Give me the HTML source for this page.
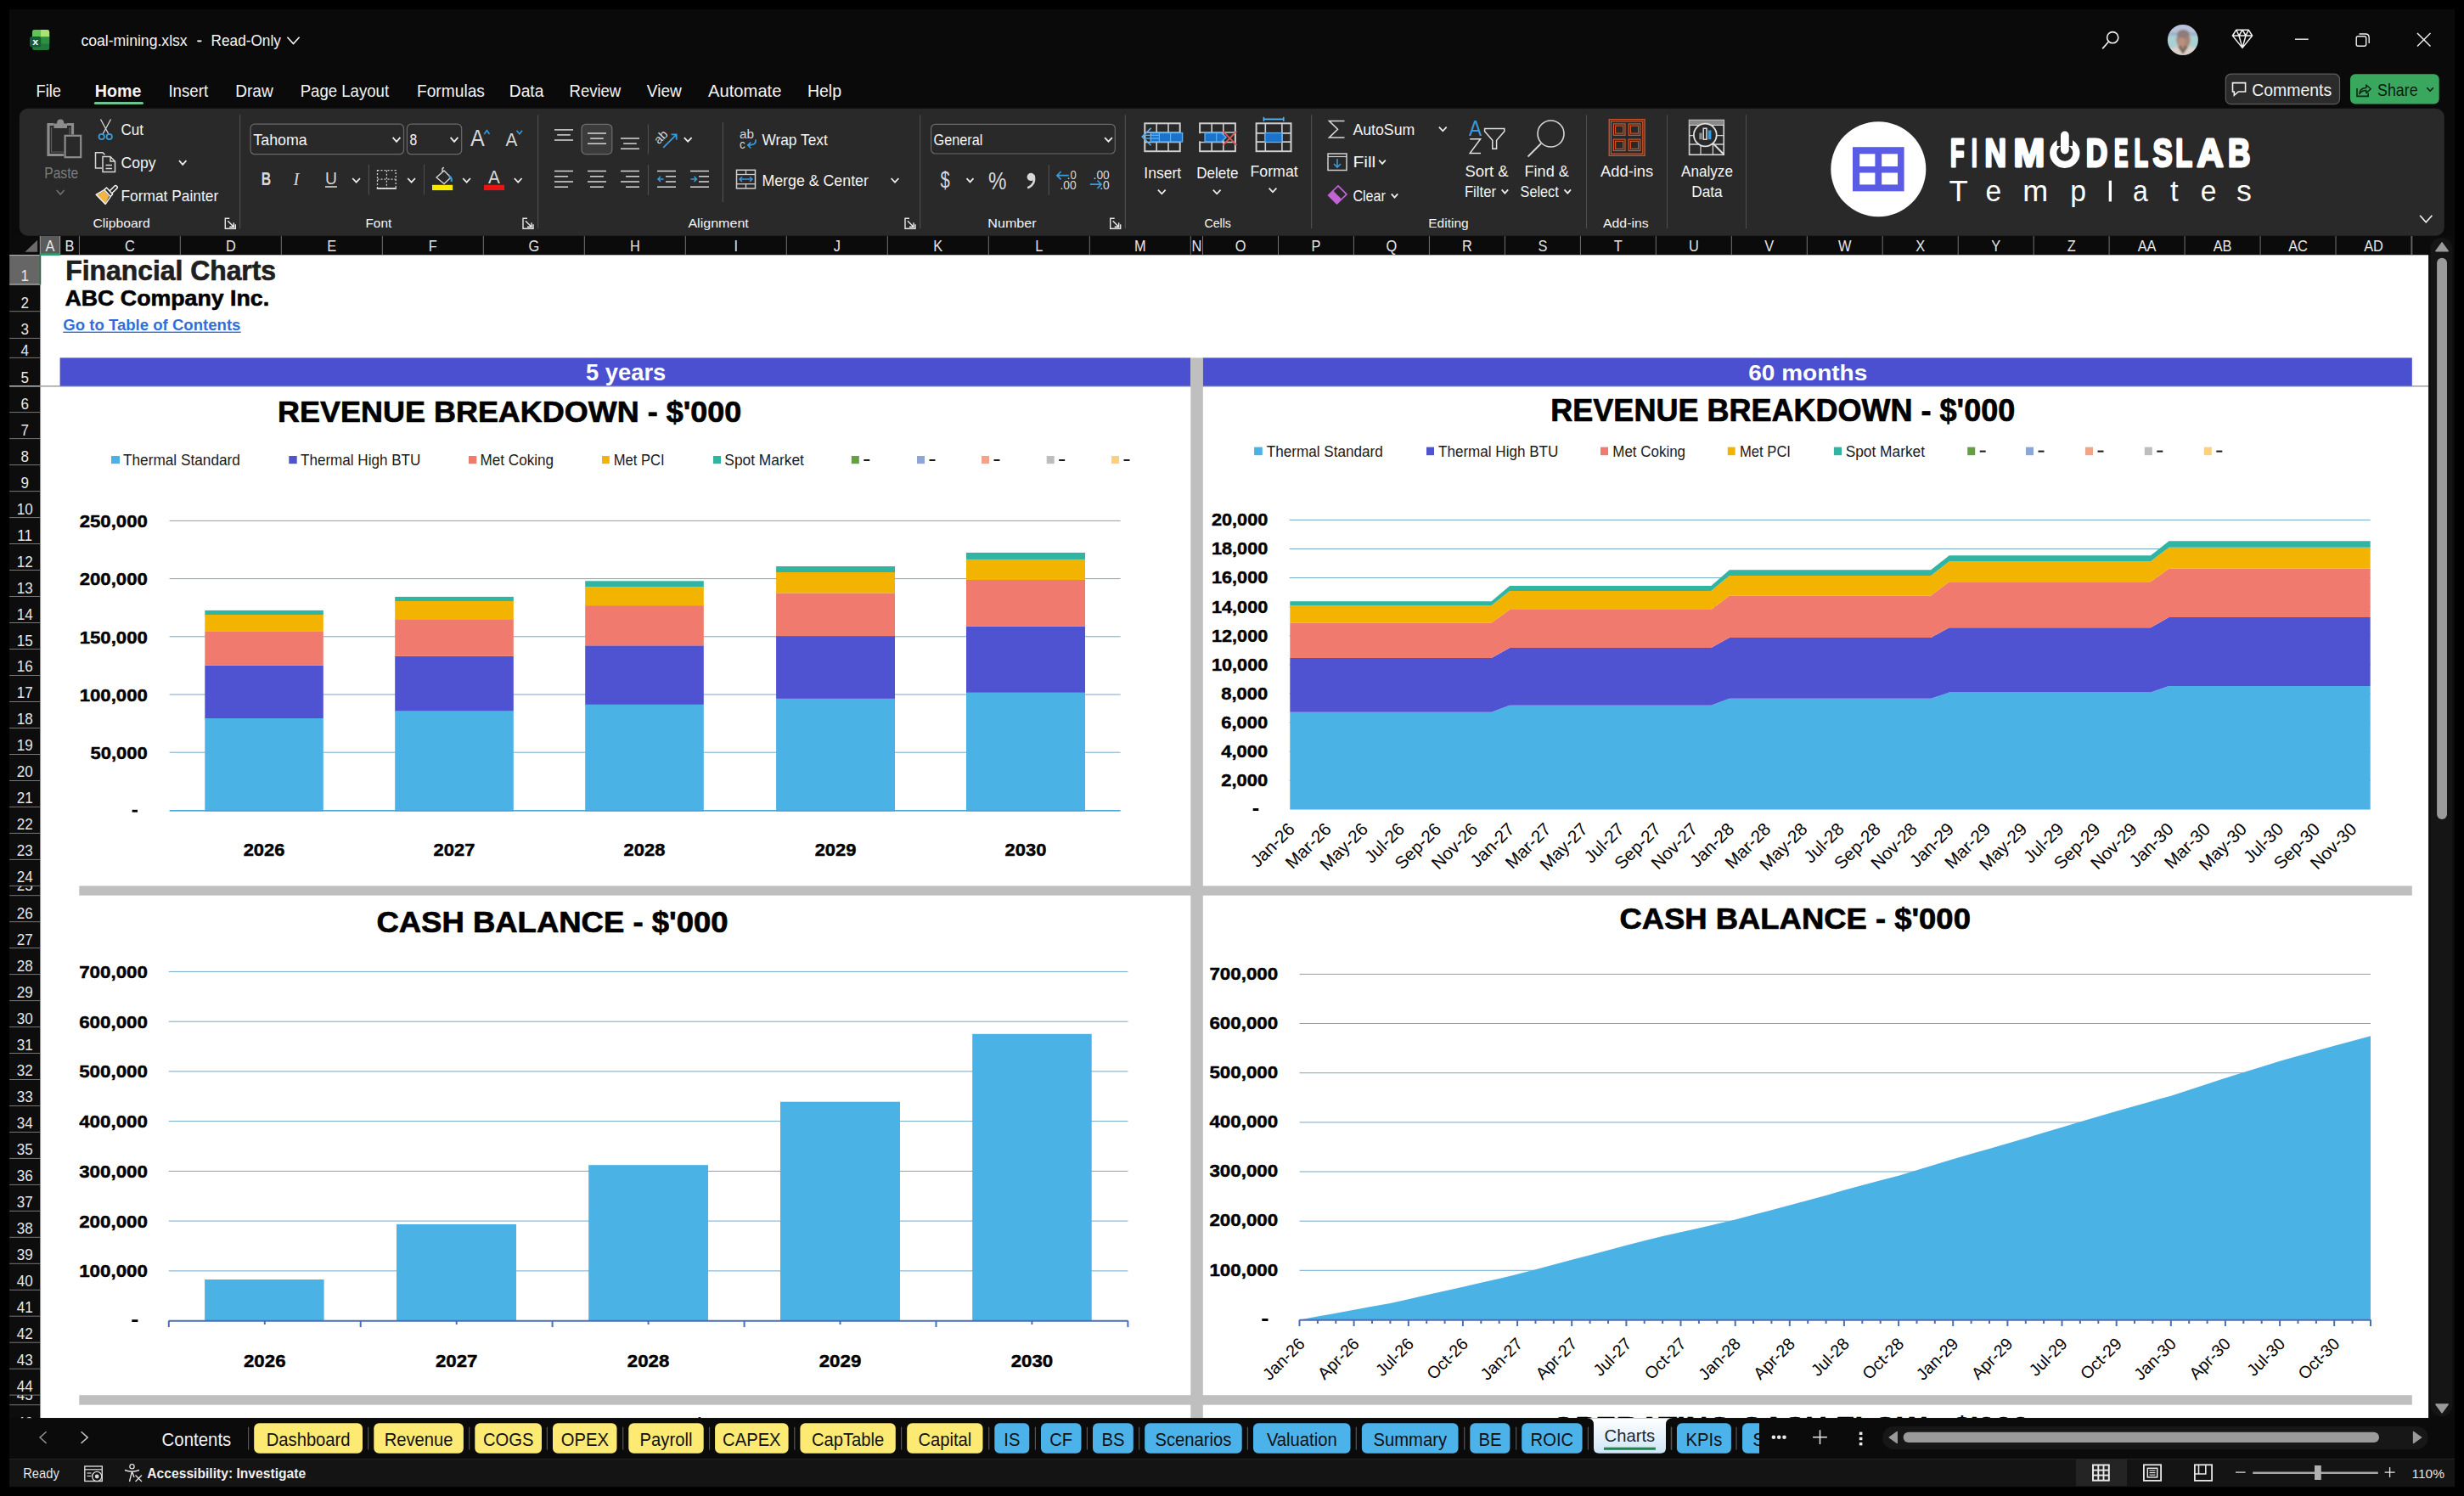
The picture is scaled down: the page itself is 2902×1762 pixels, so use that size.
<!DOCTYPE html><html><head><meta charset="utf-8"><title>coal-mining.xlsx - Excel</title>
<style>html,body{margin:0;padding:0;background:#000;width:2902px;height:1762px;overflow:hidden}svg{position:absolute;left:0;top:0;font-family:"Liberation Sans", sans-serif} text{font-family:"Liberation Sans", sans-serif}</style></head><body>
<svg width="2902" height="1762" viewBox="0 0 2902 1762">
<rect x="0.0" y="0.0" width="2902.0" height="1762.0" fill="#000" />
<rect x="11.0" y="11.0" width="2880.0" height="1740.0" fill="#0a0a0a" />
<rect x="38.0" y="35.0" width="20.2" height="24.0" fill="#217a3c" rx="2.5" />
<path d="M38 43.5 L38 38 Q38 35 41 35 L47.6 35 L47.6 43.5 Z" fill="#5fc25b" />
<path d="M47.6 43.5 L47.6 35 L55.2 35 Q58.2 35 58.2 38 L58.2 43.5 Z" fill="#a9e271" />
<rect x="38.0" y="43.5" width="20.2" height="8.0" fill="#2f8f41" />
<rect x="35.0" y="43.0" width="13.2" height="12.6" fill="#185c37" rx="2.5" />
<text transform="matrix(1.1880 0 0 1 38.30 53.00)" font-size="10.47" fill="#ffffff" font-weight="700" >x</text>
<text transform="matrix(0.9186 0 0 1 95.40 54.40)" font-size="19.19" fill="#f5f5f5" >coal-mining.xlsx</text>
<text transform="matrix(0.7935 0 0 1 232.30 54.40)" font-size="19.19" fill="#f5f5f5" >-</text>
<rect x="232.3" y="47.5" width="5.1" height="1.5" fill="#f5f5f5" />
<text transform="matrix(0.8963 0 0 1 248.60 54.40)" font-size="19.19" fill="#f5f5f5" >Read-Only</text>
<path d="M338.4 43.8 L345.5 51.6 L352.6 43.8" fill="none" stroke="#f5f5f5" stroke-width="1.6" />
<circle cx="2488.2" cy="44.2" r="6.6" fill="none" stroke="#f0f0f0" stroke-width="1.6"/>
<line x1="2483.3" y1="49.3" x2="2476.2" y2="57.4" stroke="#f0f0f0" stroke-width="1.6" />
<defs><clipPath id="av"><circle cx="2570.9" cy="47.0" r="18"/></clipPath><filter id="avb" x="-10%" y="-10%" width="120%" height="120%"><feGaussianBlur stdDeviation="0.9"/></filter></defs>
<g clip-path="url(#av)"><g filter="url(#avb)">
<rect x="2550.0" y="26.0" width="42.0" height="42.0" fill="#a9d0d2" />
<rect x="2550.0" y="26.0" width="42.0" height="15.0" fill="#b9c3dc" />
<rect x="2550.0" y="38.0" width="42.0" height="4.0" fill="#9fb4c8" />
<ellipse cx="2571.4" cy="46.5" rx="8.2" ry="10.5" fill="#a88474"/>
<ellipse cx="2571.4" cy="40.0" rx="7.2" ry="5.0" fill="#8e7c7a"/>
<ellipse cx="2569.5" cy="49.5" rx="4.5" ry="5" fill="#b89080"/>
<path d="M2550 68 L2553 59 Q2560 54.5 2565 55 L2571 62 L2577 55 Q2584 54.5 2590 59 L2592 68 Z" fill="#d9d2ca" />
<path d="M2565 55 L2571 64 L2577 55 L2574 54 L2571 58 L2568 54 Z" fill="#7a5e4e" />
</g></g>
<path d="M2633.8 35.2 L2648.2 35.2 L2652.6 42.0 L2641.0 56.4 L2629.4 42.0 Z M2629.4 42.0 L2652.6 42.0 M2633.8 35.2 L2637.0 42.0 L2641.0 35.2 L2645.0 42.0 L2648.2 35.2 M2637.0 42.0 L2641.0 56.4 L2645.0 42.0" fill="none" stroke="#f0f0f0" stroke-width="1.5" stroke-linejoin="round"/>
<line x1="2703.0" y1="46.2" x2="2718.7" y2="46.2" stroke="#f0f0f0" stroke-width="1.4" />
<rect x="2775.2" y="42.8" width="11.5" height="11.5" fill="none" rx="2" stroke="#f0f0f0" stroke-width="1.4" />
<path d="M2778.5 40.0 L2786.0 40.0 Q2790.2 40.0 2790.2 44.2 L2790.2 51.0" fill="none" stroke="#f0f0f0" stroke-width="1.4" />
<line x1="2847.0" y1="39.0" x2="2862.5" y2="54.5" stroke="#f0f0f0" stroke-width="1.5" />
<line x1="2862.5" y1="39.0" x2="2847.0" y2="54.5" stroke="#f0f0f0" stroke-width="1.5" />
<rect x="2621.3" y="87.2" width="134.2" height="35.4" fill="#2b2b2b" rx="6" stroke="#5d5d5d" stroke-width="1.2" />
<path d="M2629.5 97.6 L2644.6 97.6 L2644.6 108.0 L2636.3 108.0 L2631.3 112.3 L2631.3 108.0 L2629.5 108.0 Z" fill="none" stroke="#f0f0f0" stroke-width="1.6" stroke-linejoin="miter"/>
<text transform="matrix(0.9908 0 0 1 2652.20 112.70)" font-size="19.62" fill="#f5f5f5" >Comments</text>
<rect x="2768.0" y="87.2" width="104.7" height="35.4" fill="#3aa75e" rx="6" />
<path d="M2776.0 104.0 L2776.0 113.4 L2789.2 113.4 L2789.2 109.5" fill="none" stroke="#0d2614" stroke-width="1.6" />
<path d="M2778.8 110.6 Q2779.5 103.8 2786.8 103.6 L2786.8 100.0 L2792.2 104.8 L2786.8 109.6 L2786.8 106.6 Q2781.8 106.6 2778.8 110.6 Z" fill="none" stroke="#0d2614" stroke-width="1.5" stroke-linejoin="round"/>
<text transform="matrix(0.9086 0 0 1 2800.00 112.70)" font-size="19.62" fill="#0d1a10" >Share</text>
<path d="M2858.3 103.3 L2862.1 107.2 L2865.9 103.3" fill="none" stroke="#0d1a10" stroke-width="1.6" />
<text transform="matrix(0.9104 0 0 1 42.60 114.00)" font-size="20.06" fill="#f5f5f5" >File</text>
<text transform="matrix(0.9792 0 0 1 111.80 114.00)" font-size="20.06" fill="#f5f5f5" font-weight="700" >Home</text>
<text transform="matrix(0.9313 0 0 1 198.40 114.00)" font-size="20.06" fill="#f5f5f5" >Insert</text>
<text transform="matrix(0.9523 0 0 1 277.20 114.00)" font-size="20.06" fill="#f5f5f5" >Draw</text>
<text transform="matrix(0.9278 0 0 1 353.70 114.00)" font-size="20.06" fill="#f5f5f5" >Page Layout</text>
<text transform="matrix(0.9565 0 0 1 491.00 114.00)" font-size="20.06" fill="#f5f5f5" >Formulas</text>
<text transform="matrix(0.9570 0 0 1 599.80 114.00)" font-size="20.06" fill="#f5f5f5" >Data</text>
<text transform="matrix(0.9241 0 0 1 670.50 114.00)" font-size="20.06" fill="#f5f5f5" >Review</text>
<text transform="matrix(0.9507 0 0 1 761.80 114.00)" font-size="20.06" fill="#f5f5f5" >View</text>
<text transform="matrix(1.0076 0 0 1 834.00 114.00)" font-size="20.06" fill="#f5f5f5" >Automate</text>
<text transform="matrix(0.9704 0 0 1 951.00 114.00)" font-size="20.06" fill="#f5f5f5" >Help</text>
<rect x="110.8" y="120.1" width="58.2" height="3.0" fill="#6cc48f" rx="1.5" />
<rect x="22.8" y="127.8" width="2856.0" height="149.9" fill="#292929" rx="10" />
<path d="M63.5 146.5 L57 146.5 L57 182.5 L75 182.5 M85.5 158.5 L85.5 146.5 L79 146.5" fill="none" stroke="#8c8c8c" stroke-width="3.2" />
<path d="M60.5 150 L60.5 179 L75 179 M82 158.5 L82 150" fill="none" stroke="#5e5e5e" stroke-width="1.2" />
<path d="M63.5 151 L63.5 145.5 L67 145.5 Q67 140.5 71.2 140.5 Q75.4 140.5 75.4 145.5 L79 145.5 L79 151 Z" fill="#8c8c8c" />
<rect x="76.6" y="159.8" width="18.6" height="25.4" fill="none" stroke="#8c8c8c" stroke-width="2.2" />
<text transform="matrix(0.8976 0 0 1 52.20 209.70)" font-size="17.44" fill="#7c7c7c" >Paste</text>
<path d="M66.7 224.0 L71.2 229.0 L75.7 224.0" fill="none" stroke="#6e6e6e" stroke-width="1.8" />
<path d="M118.5 140.5 L128.5 159 M130.5 140.5 L120.5 159" fill="none" stroke="#d8d8d8" stroke-width="1.3" />
<circle cx="119.7" cy="161" r="3.2" fill="none" stroke="#3b9ad9" stroke-width="1.8"/>
<circle cx="128.7" cy="161" r="3.2" fill="none" stroke="#3b9ad9" stroke-width="1.8"/>
<text transform="matrix(0.9610 0 0 1 142.50 158.80)" font-size="17.73" fill="#f5f5f5" >Cut</text>
<path d="M120 198 L112.5 198 L112.5 179.8 L121 179.8 L123.5 182.3" fill="none" stroke="#d6d6d6" stroke-width="1.5" />
<path d="M121 184.5 L130 184.5 L135.5 190 L135.5 202.5 L121 202.5 Z M130 184.5 L130 190 L135.5 190 M124.5 194.5 L132 194.5 M124.5 198.5 L132 198.5" fill="none" stroke="#d6d6d6" stroke-width="1.5" />
<text transform="matrix(0.9688 0 0 1 142.50 197.70)" font-size="18.17" fill="#f5f5f5" >Copy</text>
<path d="M211.0 189.2 L215.2 193.8 L219.4 189.2" fill="none" stroke="#ececec" stroke-width="1.8" />
<path d="M113.5 229.5 L118.5 234 L124 240 Z" fill="#e8a33a" />
<path d="M113.5 229.5 L123 224.5 L128.5 231 L124 240 Z" fill="#f0b545" />
<path d="M113.2 229.2 L122.8 223.6 L130.2 231.6 L124.2 240.4 Z" fill="none" stroke="#f2f2f2" stroke-width="1.5" stroke-linejoin="round"/>
<path d="M122.8 223.6 L125.5 221 L132.6 228.8 L130.2 231.6" fill="none" stroke="#f2f2f2" stroke-width="1.5" stroke-linejoin="round"/>
<path d="M129 225 L134.8 219.2 Q136.3 217.8 137.6 219.2 Q139 220.6 137.6 222 L131.8 227.8" fill="none" stroke="#f2f2f2" stroke-width="1.5" stroke-linejoin="round"/>
<text transform="matrix(0.9256 0 0 1 142.50 237.00)" font-size="18.75" fill="#f5f5f5" >Format Painter</text>
<text transform="matrix(1.0206 0 0 1 109.50 267.80)" font-size="15.41" fill="#f5f5f5" >Clipboard</text>
<path d="M270.3 257.2 L265.3 257.2 L265.3 269.2 L277.3 269.2 L277.3 264.2" fill="none" stroke="#e8e8e8" stroke-width="1.4" />
<path d="M268.3 260.2 L275.3 267.2 M275.3 262.2 L275.3 267.2 L270.3 267.2" fill="none" stroke="#e8e8e8" stroke-width="1.4" />
<line x1="282.6" y1="135.2" x2="282.6" y2="269.0" stroke="#4d4d4d" stroke-width="1.2" />
<rect x="295.0" y="146.2" width="180.5" height="35.5" fill="none" rx="5" stroke="#6a6a6a" stroke-width="1.2" />
<text transform="matrix(0.9368 0 0 1 298.30 171.00)" font-size="19.04" fill="#f5f5f5" >Tahoma</text>
<path d="M462.6 161.9 L467.0 166.9 L471.4 161.9" fill="none" stroke="#ececec" stroke-width="1.8" />
<rect x="479.4" y="146.2" width="64.3" height="35.5" fill="none" rx="5" stroke="#6a6a6a" stroke-width="1.2" />
<text transform="matrix(0.8233 0 0 1 482.40 171.00)" font-size="19.04" fill="#f5f5f5" >8</text>
<path d="M530.6 161.9 L535.0 166.9 L539.4 161.9" fill="none" stroke="#ececec" stroke-width="1.8" />
<text transform="matrix(0.9080 0 0 1 554.00 171.80)" font-size="27.62" fill="#d8d8d8" >A</text>
<path d="M570.3 158.0 L573.4 153.6 L576.5 158.0" fill="none" stroke="#3b9ad9" stroke-width="1.6" />
<text transform="matrix(0.9268 0 0 1 595.60 171.80)" font-size="22.38" fill="#d8d8d8" >A</text>
<path d="M608.5 153.8 L611.8 157.8 L615.1 153.8" fill="none" stroke="#3b9ad9" stroke-width="1.6" />
<text transform="matrix(0.7311 0 0 1 307.80 217.80)" font-size="21.66" fill="#d8d8d8" font-weight="700" >B</text>
<text x="345.5" y="217.8" font-size="20.5" fill="#d8d8d8" font-style="italic" style="font-family:'Liberation Serif'">I</text>
<text transform="matrix(0.9556 0 0 1 383.00 216.80)" font-size="20.20" fill="#d8d8d8" >U</text>
<rect x="383.0" y="219.2" width="13.9" height="1.6" fill="#d8d8d8" />
<path d="M415.2 210.0 L419.6 214.6 L424.0 210.0" fill="none" stroke="#ececec" stroke-width="1.8" />
<line x1="434.4" y1="193.7" x2="434.4" y2="229.5" stroke="#4d4d4d" stroke-width="1.2" />
<rect x="444.5" y="200.7" width="21.7" height="21.0" fill="none" stroke="#d0d0d0" stroke-width="1.3" stroke-dasharray="2 2"/>
<line x1="444.5" y1="211.2" x2="466.2" y2="211.2" stroke="#d0d0d0" stroke-width="1.2" stroke-dasharray="2 2"/>
<line x1="455.4" y1="200.7" x2="455.4" y2="221.7" stroke="#d0d0d0" stroke-width="1.2" stroke-dasharray="2 2"/>
<line x1="443.8" y1="222.0" x2="466.9" y2="222.0" stroke="#e0e0e0" stroke-width="1.8" />
<path d="M480.2 210.0 L484.6 214.6 L489.0 210.0" fill="none" stroke="#ececec" stroke-width="1.8" />
<line x1="499.5" y1="193.7" x2="499.5" y2="229.5" stroke="#4d4d4d" stroke-width="1.2" />
<path d="M514 209 L523 201 L531 209 L523 216.5 Z M521 203 L521 199.5 Q521 197.5 523 197.5" fill="none" stroke="#d8d8d8" stroke-width="1.4" stroke-linejoin="round"/>
<path d="M528.5 207 Q533 210 531.5 214" fill="none" stroke="#3b9ad9" stroke-width="2.2" />
<rect x="509.0" y="217.8" width="24.2" height="6.3" fill="#f5ea00" />
<path d="M545.2 210.0 L549.6 214.6 L554.0 210.0" fill="none" stroke="#ececec" stroke-width="1.8" />
<text transform="matrix(0.9034 0 0 1 575.10 216.00)" font-size="22.97" fill="#d8d8d8" >A</text>
<rect x="570.0" y="217.8" width="24.1" height="6.3" fill="#e81515" />
<path d="M605.8 210.0 L610.2 214.6 L614.6 210.0" fill="none" stroke="#ececec" stroke-width="1.8" />
<text transform="matrix(0.9963 0 0 1 430.50 267.80)" font-size="15.41" fill="#f5f5f5" >Font</text>
<path d="M621.0 257.2 L616.0 257.2 L616.0 269.2 L628.0 269.2 L628.0 264.2" fill="none" stroke="#e8e8e8" stroke-width="1.4" />
<path d="M619.0 260.2 L626.0 267.2 M626.0 262.2 L626.0 267.2 L621.0 267.2" fill="none" stroke="#e8e8e8" stroke-width="1.4" />
<line x1="633.6" y1="135.2" x2="633.6" y2="269.0" stroke="#4d4d4d" stroke-width="1.2" />
<line x1="653.0" y1="152.9" x2="675.0" y2="152.9" stroke="#d8d8d8" stroke-width="1.5" />
<line x1="656.2" y1="158.9" x2="671.8" y2="158.9" stroke="#d8d8d8" stroke-width="1.5" />
<line x1="653.0" y1="165.0" x2="675.0" y2="165.0" stroke="#d8d8d8" stroke-width="1.5" />
<rect x="685.0" y="146.3" width="35.8" height="35.3" fill="#3b3b3b" rx="5" stroke="#6e6e6e" stroke-width="1.2" />
<line x1="692.0" y1="157.0" x2="714.0" y2="157.0" stroke="#d8d8d8" stroke-width="1.5" />
<line x1="695.2" y1="163.1" x2="710.8" y2="163.1" stroke="#d8d8d8" stroke-width="1.5" />
<line x1="692.0" y1="169.2" x2="714.0" y2="169.2" stroke="#d8d8d8" stroke-width="1.5" />
<line x1="731.0" y1="163.0" x2="753.0" y2="163.0" stroke="#d8d8d8" stroke-width="1.5" />
<line x1="734.2" y1="169.1" x2="749.8" y2="169.1" stroke="#d8d8d8" stroke-width="1.5" />
<line x1="731.0" y1="175.2" x2="753.0" y2="175.2" stroke="#d8d8d8" stroke-width="1.5" />
<line x1="763.5" y1="146.3" x2="763.5" y2="181.6" stroke="#4d4d4d" stroke-width="1.2" />
<text x="776.0" y="170.5" font-size="14.5" fill="#d8d8d8" transform="rotate(-45 776 170.5)">ab</text>
<path d="M781.2 173.8 L796.2 158.8 M790.6 158.3 L796.7 158.3 L796.7 164.4" fill="none" stroke="#3b9ad9" stroke-width="1.8" />
<path d="M805.8 162.1 L810.2 166.7 L814.6 162.1" fill="none" stroke="#ececec" stroke-width="1.8" />
<line x1="653.0" y1="201.5" x2="675.0" y2="201.5" stroke="#d8d8d8" stroke-width="1.5" />
<line x1="653.0" y1="207.8" x2="669.0" y2="207.8" stroke="#d8d8d8" stroke-width="1.5" />
<line x1="653.0" y1="214.0" x2="675.0" y2="214.0" stroke="#d8d8d8" stroke-width="1.5" />
<line x1="653.0" y1="220.2" x2="669.0" y2="220.2" stroke="#d8d8d8" stroke-width="1.5" />
<line x1="692.0" y1="201.5" x2="714.0" y2="201.5" stroke="#d8d8d8" stroke-width="1.5" />
<line x1="695.0" y1="207.8" x2="711.0" y2="207.8" stroke="#d8d8d8" stroke-width="1.5" />
<line x1="692.0" y1="214.0" x2="714.0" y2="214.0" stroke="#d8d8d8" stroke-width="1.5" />
<line x1="695.0" y1="220.2" x2="711.0" y2="220.2" stroke="#d8d8d8" stroke-width="1.5" />
<line x1="731.0" y1="201.5" x2="753.0" y2="201.5" stroke="#d8d8d8" stroke-width="1.5" />
<line x1="737.0" y1="207.8" x2="753.0" y2="207.8" stroke="#d8d8d8" stroke-width="1.5" />
<line x1="731.0" y1="214.0" x2="753.0" y2="214.0" stroke="#d8d8d8" stroke-width="1.5" />
<line x1="737.0" y1="220.2" x2="753.0" y2="220.2" stroke="#d8d8d8" stroke-width="1.5" />
<line x1="763.5" y1="194.0" x2="763.5" y2="230.0" stroke="#4d4d4d" stroke-width="1.2" />
<line x1="774.0" y1="201.5" x2="796.0" y2="201.5" stroke="#d8d8d8" stroke-width="1.5" />
<line x1="784.0" y1="207.8" x2="796.0" y2="207.8" stroke="#d8d8d8" stroke-width="1.5" />
<line x1="784.0" y1="214.0" x2="796.0" y2="214.0" stroke="#d8d8d8" stroke-width="1.5" />
<line x1="774.0" y1="220.2" x2="796.0" y2="220.2" stroke="#d8d8d8" stroke-width="1.5" />
<path d="M775 210.9 L781.5 210.9 M778 207.8 L775 210.9 L778 214" fill="none" stroke="#3b9ad9" stroke-width="1.5" />
<line x1="813.0" y1="201.5" x2="835.0" y2="201.5" stroke="#d8d8d8" stroke-width="1.5" />
<line x1="823.0" y1="207.8" x2="835.0" y2="207.8" stroke="#d8d8d8" stroke-width="1.5" />
<line x1="823.0" y1="214.0" x2="835.0" y2="214.0" stroke="#d8d8d8" stroke-width="1.5" />
<line x1="813.0" y1="220.2" x2="835.0" y2="220.2" stroke="#d8d8d8" stroke-width="1.5" />
<path d="M813.5 210.9 L820.5 210.9 M817.5 207.8 L820.5 210.9 L817.5 214" fill="none" stroke="#3b9ad9" stroke-width="1.5" />
<line x1="851.4" y1="144.0" x2="851.4" y2="238.0" stroke="#4d4d4d" stroke-width="1.2" />
<text transform="matrix(0.9941 0 0 1 871.00 163.30)" font-size="15.41" fill="#d8d8d8" >ab</text>
<text transform="matrix(0.8827 0 0 1 871.00 174.70)" font-size="15.41" fill="#d8d8d8" >c</text>
<path d="M889.8 164.4 Q891.5 171.0 881.0 171.0 M884.3 167.7 L880.8 171.0 L884.3 174.5" fill="none" stroke="#3b9ad9" stroke-width="1.7" />
<text transform="matrix(0.9391 0 0 1 897.40 171.10)" font-size="18.46" fill="#f5f5f5" >Wrap Text</text>
<rect x="867.5" y="200.3" width="22.0" height="21.6" fill="none" stroke="#d0d0d0" stroke-width="1.5" />
<line x1="867.5" y1="205.5" x2="889.5" y2="205.5" stroke="#d0d0d0" stroke-width="1.3" />
<line x1="867.5" y1="216.7" x2="889.5" y2="216.7" stroke="#d0d0d0" stroke-width="1.3" />
<line x1="878.5" y1="200.3" x2="878.5" y2="205.5" stroke="#d0d0d0" stroke-width="1.3" />
<line x1="878.5" y1="216.7" x2="878.5" y2="221.9" stroke="#d0d0d0" stroke-width="1.3" />
<path d="M871 211.1 L886 211.1 M874 208.3 L871 211.1 L874 213.9 M883 208.3 L886 211.1 L883 213.9" fill="none" stroke="#3b9ad9" stroke-width="1.5" />
<text transform="matrix(0.9488 0 0 1 897.40 219.30)" font-size="18.75" fill="#f5f5f5" >Merge &amp; Center</text>
<path d="M1049.6 210.0 L1054.0 214.6 L1058.4 210.0" fill="none" stroke="#ececec" stroke-width="1.8" />
<text transform="matrix(1.0426 0 0 1 810.40 267.80)" font-size="15.41" fill="#f5f5f5" >Alignment</text>
<path d="M1071.0 257.2 L1066.0 257.2 L1066.0 269.2 L1078.0 269.2 L1078.0 264.2" fill="none" stroke="#e8e8e8" stroke-width="1.4" />
<path d="M1069.0 260.2 L1076.0 267.2 M1076.0 262.2 L1076.0 267.2 L1071.0 267.2" fill="none" stroke="#e8e8e8" stroke-width="1.4" />
<line x1="1083.7" y1="135.2" x2="1083.7" y2="269.0" stroke="#4d4d4d" stroke-width="1.2" />
<rect x="1096.6" y="146.3" width="216.7" height="34.7" fill="none" rx="5" stroke="#6a6a6a" stroke-width="1.2" />
<text transform="matrix(0.8607 0 0 1 1099.50 171.00)" font-size="18.90" fill="#f5f5f5" >General</text>
<path d="M1301.1 162.1 L1305.5 166.7 L1309.9 162.1" fill="none" stroke="#ececec" stroke-width="1.8" />
<text transform="matrix(0.7531 0 0 1 1107.50 221.00)" font-size="27.03" fill="#d8d8d8" >$</text>
<path d="M1138.5 210.2 L1142.5 214.4 L1146.5 210.2" fill="none" stroke="#ececec" stroke-width="1.8" />
<text transform="matrix(0.7990 0 0 1 1164.10 223.00)" font-size="30.23" fill="#d8d8d8" >%</text>
<circle cx="1214.2" cy="208.4" r="4.6" fill="#d8d8d8"/>
<path d="M1217.6 206.5 Q1220.2 217.0 1210.2 221.4" fill="none" stroke="#d8d8d8" stroke-width="2.4" />
<line x1="1235.3" y1="194.0" x2="1235.3" y2="230.0" stroke="#4d4d4d" stroke-width="1.2" />
<text transform="matrix(0.8981 0 0 1 1256.80 210.50)" font-size="14.53" fill="#d8d8d8" >.0</text>
<text transform="matrix(0.9503 0 0 1 1248.50 222.70)" font-size="14.53" fill="#d8d8d8" >.00</text>
<path d="M1244.9 206.7 L1258.8 206.7 M1249.6 202.0 L1244.9 206.7 L1249.6 211.4" fill="none" stroke="#3b9ad9" stroke-width="1.7" />
<text transform="matrix(0.9503 0 0 1 1287.60 210.50)" font-size="14.53" fill="#d8d8d8" >.00</text>
<text transform="matrix(0.9558 0 0 1 1295.20 222.70)" font-size="14.53" fill="#d8d8d8" >.0</text>
<path d="M1283.8 217.2 L1297.1 217.2 M1292.4 212.5 L1297.1 217.2 L1292.4 221.9" fill="none" stroke="#3b9ad9" stroke-width="1.7" />
<text transform="matrix(1.0480 0 0 1 1163.30 267.80)" font-size="15.41" fill="#f5f5f5" >Number</text>
<path d="M1312.7 257.2 L1307.7 257.2 L1307.7 269.2 L1319.7 269.2 L1319.7 264.2" fill="none" stroke="#e8e8e8" stroke-width="1.4" />
<path d="M1310.7 260.2 L1317.7 267.2 M1317.7 262.2 L1317.7 267.2 L1312.7 267.2" fill="none" stroke="#e8e8e8" stroke-width="1.4" />
<line x1="1325.4" y1="135.2" x2="1325.4" y2="269.0" stroke="#4d4d4d" stroke-width="1.2" />
<rect x="1348.3" y="145.3" width="41.4" height="32.9" fill="none" stroke="#cfcfcf" stroke-width="2.0" />
<line x1="1362.2" y1="145.3" x2="1362.2" y2="178.2" stroke="#cfcfcf" stroke-width="1.6" />
<line x1="1376.0" y1="145.3" x2="1376.0" y2="178.2" stroke="#cfcfcf" stroke-width="1.6" />
<line x1="1348.3" y1="156.0" x2="1389.7" y2="156.0" stroke="#cfcfcf" stroke-width="1.6" />
<line x1="1348.3" y1="167.5" x2="1389.7" y2="167.5" stroke="#cfcfcf" stroke-width="1.6" />
<rect x="1355.2" y="156.5" width="37.4" height="10.5" fill="#1b73cc" stroke="#5cb2f2" stroke-width="1.4" />
<line x1="1365.4" y1="156.5" x2="1365.4" y2="167.0" stroke="#5cb2f2" stroke-width="1.2" />
<line x1="1378.6" y1="156.5" x2="1378.6" y2="167.0" stroke="#5cb2f2" stroke-width="1.2" />
<path d="M1355.6 150.9 L1345.2 161.1 L1355.6 171.3" fill="none" stroke="#5cb2f2" stroke-width="1.6" />
<line x1="1346.5" y1="159.3" x2="1365.0" y2="159.3" stroke="#5cb2f2" stroke-width="1.3" />
<line x1="1346.5" y1="163.0" x2="1365.0" y2="163.0" stroke="#5cb2f2" stroke-width="1.3" />
<text transform="matrix(0.9293 0 0 1 1347.30 210.00)" font-size="18.90" fill="#f5f5f5" >Insert</text>
<path d="M1363.9 223.7 L1368.3 228.3 L1372.7 223.7" fill="none" stroke="#ececec" stroke-width="1.8" />
<rect x="1413.1" y="145.3" width="41.8" height="32.9" fill="none" stroke="#cfcfcf" stroke-width="2.0" />
<line x1="1427.2" y1="145.3" x2="1427.2" y2="178.2" stroke="#cfcfcf" stroke-width="1.6" />
<line x1="1440.8" y1="145.3" x2="1440.8" y2="178.2" stroke="#cfcfcf" stroke-width="1.6" />
<line x1="1413.1" y1="156.0" x2="1454.9" y2="156.0" stroke="#cfcfcf" stroke-width="1.6" />
<line x1="1413.1" y1="167.5" x2="1454.9" y2="167.5" stroke="#cfcfcf" stroke-width="1.6" />
<rect x="1412.0" y="157.2" width="7.0" height="9.1" fill="#292929" />
<path d="M1419.1 156.5 L1438.5 156.5 L1444.2 161.8 L1438.5 167.0 L1419.1 167.0 Z" fill="#1b73cc" stroke="#5cb2f2" stroke-width="1.4" />
<line x1="1432.7" y1="156.5" x2="1432.7" y2="167.0" stroke="#5cb2f2" stroke-width="1.2" />
<line x1="1440.4" y1="154.6" x2="1456.4" y2="171.0" stroke="#e05555" stroke-width="1.8" />
<line x1="1456.4" y1="154.6" x2="1440.4" y2="171.0" stroke="#e05555" stroke-width="1.8" />
<text transform="matrix(0.9046 0 0 1 1409.20 210.00)" font-size="18.90" fill="#f5f5f5" >Delete</text>
<path d="M1428.8 223.7 L1433.2 228.3 L1437.6 223.7" fill="none" stroke="#ececec" stroke-width="1.8" />
<rect x="1479.6" y="145.3" width="40.9" height="32.9" fill="none" stroke="#cfcfcf" stroke-width="2.0" />
<line x1="1490.3" y1="145.3" x2="1490.3" y2="178.2" stroke="#cfcfcf" stroke-width="1.6" />
<line x1="1509.9" y1="145.3" x2="1509.9" y2="178.2" stroke="#cfcfcf" stroke-width="1.6" />
<line x1="1479.6" y1="156.9" x2="1520.5" y2="156.9" stroke="#cfcfcf" stroke-width="1.6" />
<line x1="1479.6" y1="167.1" x2="1520.5" y2="167.1" stroke="#cfcfcf" stroke-width="1.6" />
<rect x="1489.9" y="156.5" width="19.9" height="11.0" fill="#1b73cc" stroke="#5cb2f2" stroke-width="1.3" />
<line x1="1488.4" y1="140.4" x2="1511.8" y2="140.4" stroke="#5cb2f2" stroke-width="1.8" />
<line x1="1488.4" y1="137.8" x2="1488.4" y2="143.0" stroke="#5cb2f2" stroke-width="1.5" />
<line x1="1511.8" y1="137.8" x2="1511.8" y2="143.0" stroke="#5cb2f2" stroke-width="1.5" />
<text transform="matrix(0.9470 0 0 1 1472.50 207.90)" font-size="18.75" fill="#f5f5f5" >Format</text>
<path d="M1494.6 221.7 L1499.0 226.3 L1503.4 221.7" fill="none" stroke="#ececec" stroke-width="1.8" />
<text transform="matrix(0.9218 0 0 1 1418.40 267.80)" font-size="15.41" fill="#f5f5f5" >Cells</text>
<line x1="1544.6" y1="135.2" x2="1544.6" y2="269.0" stroke="#4d4d4d" stroke-width="1.2" />
<path d="M1583.5 142.5 L1565.5 142.5 L1575.5 152.3 L1565.5 162 L1583.5 162" fill="none" stroke="#d8d8d8" stroke-width="1.6" />
<text transform="matrix(0.9764 0 0 1 1593.40 159.20)" font-size="18.17" fill="#f5f5f5" >AutoSum</text>
<path d="M1694.9 149.7 L1699.3 154.3 L1703.7 149.7" fill="none" stroke="#ececec" stroke-width="1.8" />
<rect x="1564.0" y="181.0" width="22.0" height="19.5" fill="none" stroke="#d0d0d0" stroke-width="1.5" />
<line x1="1564.0" y1="184.5" x2="1586.0" y2="184.5" stroke="#d0d0d0" stroke-width="1.2" />
<path d="M1575 187 L1575 197 M1571 193 L1575 197 L1579 193" fill="none" stroke="#3b9ad9" stroke-width="1.6" />
<text transform="matrix(1.1477 0 0 1 1593.40 197.40)" font-size="18.31" fill="#f5f5f5" >Fill</text>
<path d="M1624.2 188.7 L1628.0 192.9 L1631.8 188.7" fill="none" stroke="#ececec" stroke-width="1.8" />
<path d="M1564.5 230 L1576 218.8 L1586 228.8 L1574.5 240 Z" fill="none" stroke="#c263d6" stroke-width="1.7" stroke-linejoin="round"/>
<path d="M1564.5 230 L1570 224.5 L1580 234.5 L1574.5 240 Z" fill="#c263d6" />
<text transform="matrix(0.8658 0 0 1 1593.40 237.00)" font-size="18.60" fill="#f5f5f5" >Clear</text>
<path d="M1638.8 228.4 L1642.5 232.6 L1646.2 228.4" fill="none" stroke="#ececec" stroke-width="1.8" />
<text transform="matrix(0.8868 0 0 1 1730.00 160.00)" font-size="25.58" fill="#3b9ad9" >A</text>
<path d="M1731.2 163.8 L1743.6 163.8 L1731.2 180.6 L1744.0 180.6" fill="none" stroke="#e0e0e0" stroke-width="1.5" />
<path d="M1748.6 151.6 L1771.8 151.6 L1771.8 154.8 L1762.6 165.2 L1762.6 175.2 L1757.8 175.2 L1757.8 165.2 L1748.6 154.8 Z" fill="none" stroke="#e0e0e0" stroke-width="1.5" stroke-linejoin="miter"/>
<text transform="matrix(1.0406 0 0 1 1725.40 207.90)" font-size="17.73" fill="#f5f5f5" >Sort &amp;</text>
<text transform="matrix(0.9424 0 0 1 1724.90 231.50)" font-size="17.73" fill="#f5f5f5" >Filter</text>
<path d="M1768.7 223.4 L1772.4 227.6 L1776.2 223.4" fill="none" stroke="#ececec" stroke-width="1.8" />
<circle cx="1826.5" cy="157.5" r="15.5" fill="none" stroke="#d8d8d8" stroke-width="1.6"/>
<line x1="1815.0" y1="169.0" x2="1799.5" y2="184.5" stroke="#d8d8d8" stroke-width="1.8" />
<text transform="matrix(1.0205 0 0 1 1795.50 207.90)" font-size="17.73" fill="#f5f5f5" >Find &amp;</text>
<text transform="matrix(0.9149 0 0 1 1790.60 231.50)" font-size="17.73" fill="#f5f5f5" >Select</text>
<path d="M1842.5 223.4 L1846.3 227.6 L1850.0 223.4" fill="none" stroke="#ececec" stroke-width="1.8" />
<text transform="matrix(1.0054 0 0 1 1682.30 267.80)" font-size="15.41" fill="#f5f5f5" >Editing</text>
<line x1="1868.5" y1="135.2" x2="1868.5" y2="269.0" stroke="#4d4d4d" stroke-width="1.2" />
<rect x="1895.2" y="140.7" width="41.8" height="42.6" fill="none" stroke="#d4562a" stroke-width="1.3" />
<rect x="1897.4" y="142.9" width="37.4" height="38.2" fill="none" stroke="#d4562a" stroke-width="1.2" />
<rect x="1900.4" y="145.9" width="13.6" height="13.4" fill="none" stroke="#d4562a" stroke-width="1.2" />
<rect x="1902.6" y="148.1" width="9.2" height="9.0" fill="none" stroke="#d4562a" stroke-width="1.1" />
<rect x="1918.2" y="145.9" width="13.6" height="13.4" fill="none" stroke="#d4562a" stroke-width="1.2" />
<rect x="1920.4" y="148.1" width="9.2" height="9.0" fill="none" stroke="#d4562a" stroke-width="1.1" />
<rect x="1900.4" y="164.1" width="13.6" height="13.4" fill="none" stroke="#d4562a" stroke-width="1.2" />
<rect x="1902.6" y="166.3" width="9.2" height="9.0" fill="none" stroke="#d4562a" stroke-width="1.1" />
<rect x="1918.2" y="164.1" width="13.6" height="13.4" fill="none" stroke="#d4562a" stroke-width="1.2" />
<rect x="1920.4" y="166.3" width="9.2" height="9.0" fill="none" stroke="#d4562a" stroke-width="1.1" />
<text transform="matrix(1.0099 0 0 1 1885.00 207.90)" font-size="18.17" fill="#f5f5f5" >Add-ins</text>
<text transform="matrix(1.0262 0 0 1 1888.00 267.80)" font-size="15.41" fill="#f5f5f5" >Add-ins</text>
<line x1="1963.5" y1="135.2" x2="1963.5" y2="269.0" stroke="#4d4d4d" stroke-width="1.2" />
<rect x="1989.6" y="141.6" width="40.6" height="40.6" fill="none" stroke="#cfcfcf" stroke-width="1.7" />
<rect x="1989.6" y="141.6" width="40.6" height="5.2" fill="#8a8a8a" />
<line x1="1989.6" y1="147.3" x2="2030.2" y2="147.3" stroke="#cfcfcf" stroke-width="1.3" />
<line x1="1989.6" y1="159.7" x2="2030.2" y2="159.7" stroke="#cfcfcf" stroke-width="1.3" />
<line x1="1989.6" y1="170.0" x2="2030.2" y2="170.0" stroke="#cfcfcf" stroke-width="1.3" />
<line x1="2003.0" y1="147.3" x2="2003.0" y2="182.2" stroke="#cfcfcf" stroke-width="1.3" />
<line x1="2017.4" y1="147.3" x2="2017.4" y2="182.2" stroke="#cfcfcf" stroke-width="1.3" />
<circle cx="2008.3" cy="159.0" r="13.4" fill="#292929" stroke="#e0e0e0" stroke-width="1.8"/>
<rect x="2001.3" y="156.5" width="3.3" height="7.7" fill="#8f8f8f" />
<rect x="2006.2" y="151.2" width="3.8" height="13.0" fill="none" stroke="#e8e8e8" stroke-width="1.4" />
<rect x="2011.8" y="153.4" width="3.6" height="10.8" fill="#3b9ad9" />
<line x1="2017.6" y1="169.0" x2="2030.4" y2="182.0" stroke="#e0e0e0" stroke-width="1.9" />
<text transform="matrix(0.9431 0 0 1 1980.00 207.90)" font-size="18.17" fill="#f5f5f5" >Analyze</text>
<text transform="matrix(0.9499 0 0 1 1992.20 231.50)" font-size="18.17" fill="#f5f5f5" >Data</text>
<line x1="2056.5" y1="135.2" x2="2056.5" y2="269.0" stroke="#4d4d4d" stroke-width="1.2" />
<circle cx="2212.3" cy="199.2" r="56" fill="#ffffff"/>
<rect x="2182.0" y="173.2" width="60.6" height="52.1" fill="#5b5ce6" />
<rect x="2190.2" y="181.3" width="18.2" height="14.7" fill="#ffffff" />
<rect x="2216.2" y="181.3" width="18.8" height="14.7" fill="#ffffff" />
<rect x="2190.2" y="203.5" width="18.2" height="13.9" fill="#ffffff" />
<rect x="2216.2" y="203.5" width="18.8" height="13.9" fill="#ffffff" />
<text transform="matrix(0.5816 0 0 1 2296.90 196.10)" font-size="46.51" fill="#ffffff" font-weight="700" stroke="#ffffff" stroke-width="3.0" stroke-linejoin="round" >F</text>
<text transform="matrix(0.5145 0 0 1 2322.10 196.10)" font-size="46.51" fill="#ffffff" font-weight="700" stroke="#ffffff" stroke-width="3.0" stroke-linejoin="round" >I</text>
<text transform="matrix(0.7585 0 0 1 2337.50 196.10)" font-size="46.51" fill="#ffffff" font-weight="700" stroke="#ffffff" stroke-width="3.0" stroke-linejoin="round" >N</text>
<text transform="matrix(0.9475 0 0 1 2371.60 196.10)" font-size="46.51" fill="#ffffff" font-weight="700" stroke="#ffffff" stroke-width="3.0" stroke-linejoin="round" >M</text>
<text transform="matrix(0.7585 0 0 1 2456.80 196.10)" font-size="46.51" fill="#ffffff" font-weight="700" stroke="#ffffff" stroke-width="3.0" stroke-linejoin="round" >D</text>
<text transform="matrix(0.5302 0 0 1 2490.10 196.10)" font-size="46.51" fill="#ffffff" font-weight="700" stroke="#ffffff" stroke-width="3.0" stroke-linejoin="round" >E</text>
<text transform="matrix(0.5816 0 0 1 2513.60 196.10)" font-size="46.51" fill="#ffffff" font-weight="700" stroke="#ffffff" stroke-width="3.0" stroke-linejoin="round" >L</text>
<text transform="matrix(0.7436 0 0 1 2535.50 196.10)" font-size="46.51" fill="#ffffff" font-weight="700" stroke="#ffffff" stroke-width="3.0" stroke-linejoin="round" >S</text>
<text transform="matrix(0.6979 0 0 1 2562.30 196.10)" font-size="46.51" fill="#ffffff" font-weight="700" stroke="#ffffff" stroke-width="3.0" stroke-linejoin="round" >L</text>
<text transform="matrix(0.9257 0 0 1 2587.50 196.10)" font-size="46.51" fill="#ffffff" font-weight="700" stroke="#ffffff" stroke-width="3.0" stroke-linejoin="round" >A</text>
<text transform="matrix(0.7853 0 0 1 2624.00 196.10)" font-size="46.51" fill="#ffffff" font-weight="700" stroke="#ffffff" stroke-width="3.0" stroke-linejoin="round" >B</text>
<circle cx="2431.8" cy="180.2" r="13.6" fill="none" stroke="#ffffff" stroke-width="8.2"/>
<rect x="2422.6" y="158.0" width="18.4" height="14.0" fill="#292929" />
<rect x="2427.0" y="154.6" width="9.7" height="26.8" fill="#ffffff" rx="4.8" />
<text transform="matrix(1.0183 0 0 1 2295.40 237.40)" font-size="35.90" fill="#ffffff" >T</text>
<text transform="matrix(0.9335 0 0 1 2338.40 237.40)" font-size="35.90" fill="#ffffff" >e</text>
<text transform="matrix(1.0008 0 0 1 2382.30 237.40)" font-size="35.90" fill="#ffffff" >m</text>
<text transform="matrix(0.9385 0 0 1 2438.30 237.40)" font-size="35.90" fill="#ffffff" >p</text>
<rect x="2483.7" y="212.7" width="3.3" height="24.7" fill="#ffffff" />
<text transform="matrix(0.8953 0 0 1 2512.00 237.40)" font-size="35.90" fill="#ffffff" >a</text>
<text transform="matrix(0.9650 0 0 1 2556.00 237.40)" font-size="35.90" fill="#ffffff" >t</text>
<text transform="matrix(0.9385 0 0 1 2591.70 237.40)" font-size="35.90" fill="#ffffff" >e</text>
<text transform="matrix(0.9972 0 0 1 2633.90 237.40)" font-size="35.90" fill="#ffffff" >s</text>
<path d="M2850.1 253.7 L2857.25 261.8 L2864.4 253.7" fill="none" stroke="#f0f0f0" stroke-width="1.6" />
<rect x="11.0" y="278.0" width="2849.3" height="22.3" fill="#0b0b0b" />
<rect x="11.0" y="300.3" width="36.5" height="1369.9" fill="#0d0d0d" />
<rect x="47.5" y="300.3" width="2812.8" height="1369.9" fill="#ffffff" />
<rect x="47.3" y="278.0" width="23.3" height="22.3" fill="#5b5b5b" />
<rect x="47.3" y="298.6" width="23.6" height="2.0" fill="#21a366" />
<line x1="70.6" y1="278.0" x2="70.6" y2="300.3" stroke="#747474" stroke-width="1" />
<line x1="93.4" y1="278.0" x2="93.4" y2="300.3" stroke="#747474" stroke-width="1" />
<line x1="212.3" y1="278.0" x2="212.3" y2="300.3" stroke="#747474" stroke-width="1" />
<line x1="331.3" y1="278.0" x2="331.3" y2="300.3" stroke="#747474" stroke-width="1" />
<line x1="450.3" y1="278.0" x2="450.3" y2="300.3" stroke="#747474" stroke-width="1" />
<line x1="569.3" y1="278.0" x2="569.3" y2="300.3" stroke="#747474" stroke-width="1" />
<line x1="688.3" y1="278.0" x2="688.3" y2="300.3" stroke="#747474" stroke-width="1" />
<line x1="807.3" y1="278.0" x2="807.3" y2="300.3" stroke="#747474" stroke-width="1" />
<line x1="926.3" y1="278.0" x2="926.3" y2="300.3" stroke="#747474" stroke-width="1" />
<line x1="1045.3" y1="278.0" x2="1045.3" y2="300.3" stroke="#747474" stroke-width="1" />
<line x1="1164.3" y1="278.0" x2="1164.3" y2="300.3" stroke="#747474" stroke-width="1" />
<line x1="1283.3" y1="278.0" x2="1283.3" y2="300.3" stroke="#747474" stroke-width="1" />
<line x1="1402.3" y1="278.0" x2="1402.3" y2="300.3" stroke="#747474" stroke-width="1" />
<line x1="1416.5" y1="278.0" x2="1416.5" y2="300.3" stroke="#747474" stroke-width="1" />
<line x1="1505.5" y1="278.0" x2="1505.5" y2="300.3" stroke="#747474" stroke-width="1" />
<line x1="1594.4" y1="278.0" x2="1594.4" y2="300.3" stroke="#747474" stroke-width="1" />
<line x1="1683.4" y1="278.0" x2="1683.4" y2="300.3" stroke="#747474" stroke-width="1" />
<line x1="1772.4" y1="278.0" x2="1772.4" y2="300.3" stroke="#747474" stroke-width="1" />
<line x1="1861.4" y1="278.0" x2="1861.4" y2="300.3" stroke="#747474" stroke-width="1" />
<line x1="1950.3" y1="278.0" x2="1950.3" y2="300.3" stroke="#747474" stroke-width="1" />
<line x1="2039.3" y1="278.0" x2="2039.3" y2="300.3" stroke="#747474" stroke-width="1" />
<line x1="2128.3" y1="278.0" x2="2128.3" y2="300.3" stroke="#747474" stroke-width="1" />
<line x1="2217.2" y1="278.0" x2="2217.2" y2="300.3" stroke="#747474" stroke-width="1" />
<line x1="2306.2" y1="278.0" x2="2306.2" y2="300.3" stroke="#747474" stroke-width="1" />
<line x1="2395.2" y1="278.0" x2="2395.2" y2="300.3" stroke="#747474" stroke-width="1" />
<line x1="2484.1" y1="278.0" x2="2484.1" y2="300.3" stroke="#747474" stroke-width="1" />
<line x1="2573.1" y1="278.0" x2="2573.1" y2="300.3" stroke="#747474" stroke-width="1" />
<line x1="2662.1" y1="278.0" x2="2662.1" y2="300.3" stroke="#747474" stroke-width="1" />
<line x1="2751.0" y1="278.0" x2="2751.0" y2="300.3" stroke="#747474" stroke-width="1" />
<line x1="2840.0" y1="278.0" x2="2840.0" y2="300.3" stroke="#747474" stroke-width="1" />
<line x1="47.3" y1="278.0" x2="47.3" y2="300.3" stroke="#9a9a9a" stroke-width="1" />
<line x1="70.6" y1="278.0" x2="70.6" y2="300.3" stroke="#9a9a9a" stroke-width="1" />
<line x1="2840.8" y1="278.0" x2="2840.8" y2="300.3" stroke="#747474" stroke-width="1" />
<text transform="matrix(0.8800 0 0 1 58.95 296.00)" font-size="18.60" fill="#e6e6e6" text-anchor="middle" >A</text>
<text transform="matrix(0.8800 0 0 1 82.00 296.00)" font-size="18.60" fill="#e6e6e6" text-anchor="middle" >B</text>
<text transform="matrix(0.8800 0 0 1 152.80 296.00)" font-size="18.60" fill="#e6e6e6" text-anchor="middle" >C</text>
<text transform="matrix(0.8800 0 0 1 271.80 296.00)" font-size="18.60" fill="#e6e6e6" text-anchor="middle" >D</text>
<text transform="matrix(0.8800 0 0 1 390.80 296.00)" font-size="18.60" fill="#e6e6e6" text-anchor="middle" >E</text>
<text transform="matrix(0.8800 0 0 1 509.80 296.00)" font-size="18.60" fill="#e6e6e6" text-anchor="middle" >F</text>
<text transform="matrix(0.8800 0 0 1 628.80 296.00)" font-size="18.60" fill="#e6e6e6" text-anchor="middle" >G</text>
<text transform="matrix(0.8800 0 0 1 747.80 296.00)" font-size="18.60" fill="#e6e6e6" text-anchor="middle" >H</text>
<text transform="matrix(0.8800 0 0 1 866.80 296.00)" font-size="18.60" fill="#e6e6e6" text-anchor="middle" >I</text>
<text transform="matrix(0.8800 0 0 1 985.80 296.00)" font-size="18.60" fill="#e6e6e6" text-anchor="middle" >J</text>
<text transform="matrix(0.8800 0 0 1 1104.80 296.00)" font-size="18.60" fill="#e6e6e6" text-anchor="middle" >K</text>
<text transform="matrix(0.8800 0 0 1 1223.80 296.00)" font-size="18.60" fill="#e6e6e6" text-anchor="middle" >L</text>
<text transform="matrix(0.8800 0 0 1 1342.80 296.00)" font-size="18.60" fill="#e6e6e6" text-anchor="middle" >M</text>
<text transform="matrix(0.8800 0 0 1 1409.40 296.00)" font-size="18.60" fill="#e6e6e6" text-anchor="middle" >N</text>
<text transform="matrix(0.8800 0 0 1 1460.99 296.00)" font-size="18.60" fill="#e6e6e6" text-anchor="middle" >O</text>
<text transform="matrix(0.8800 0 0 1 1549.95 296.00)" font-size="18.60" fill="#e6e6e6" text-anchor="middle" >P</text>
<text transform="matrix(0.8800 0 0 1 1638.93 296.00)" font-size="18.60" fill="#e6e6e6" text-anchor="middle" >Q</text>
<text transform="matrix(0.8800 0 0 1 1727.89 296.00)" font-size="18.60" fill="#e6e6e6" text-anchor="middle" >R</text>
<text transform="matrix(0.8800 0 0 1 1816.87 296.00)" font-size="18.60" fill="#e6e6e6" text-anchor="middle" >S</text>
<text transform="matrix(0.8800 0 0 1 1905.84 296.00)" font-size="18.60" fill="#e6e6e6" text-anchor="middle" >T</text>
<text transform="matrix(0.8800 0 0 1 1994.81 296.00)" font-size="18.60" fill="#e6e6e6" text-anchor="middle" >U</text>
<text transform="matrix(0.8800 0 0 1 2083.78 296.00)" font-size="18.60" fill="#e6e6e6" text-anchor="middle" >V</text>
<text transform="matrix(0.8800 0 0 1 2172.74 296.00)" font-size="18.60" fill="#e6e6e6" text-anchor="middle" >W</text>
<text transform="matrix(0.8800 0 0 1 2261.72 296.00)" font-size="18.60" fill="#e6e6e6" text-anchor="middle" >X</text>
<text transform="matrix(0.8800 0 0 1 2350.68 296.00)" font-size="18.60" fill="#e6e6e6" text-anchor="middle" >Y</text>
<text transform="matrix(0.8800 0 0 1 2439.65 296.00)" font-size="18.60" fill="#e6e6e6" text-anchor="middle" >Z</text>
<text transform="matrix(0.8800 0 0 1 2528.62 296.00)" font-size="18.60" fill="#e6e6e6" text-anchor="middle" >AA</text>
<text transform="matrix(0.8800 0 0 1 2617.59 296.00)" font-size="18.60" fill="#e6e6e6" text-anchor="middle" >AB</text>
<text transform="matrix(0.8800 0 0 1 2706.56 296.00)" font-size="18.60" fill="#e6e6e6" text-anchor="middle" >AC</text>
<text transform="matrix(0.8800 0 0 1 2795.53 296.00)" font-size="18.60" fill="#e6e6e6" text-anchor="middle" >AD</text>
<path d="M29.4 296.7 L44.1 296.7 L44.1 282.8 Z" fill="#6a6a6a" />
<rect x="11.2" y="300.3" width="36.1" height="34.4" fill="#666666" />
<defs><clipPath id="rowclip"><rect x="11" y="300.3" width="37" height="1369.9"/></clipPath></defs>
<line x1="11.2" y1="335.2" x2="47.3" y2="335.2" stroke="#787878" stroke-width="1" />
<line x1="11.2" y1="366.7" x2="47.3" y2="366.7" stroke="#787878" stroke-width="1" />
<line x1="11.2" y1="398.4" x2="47.3" y2="398.4" stroke="#787878" stroke-width="1" />
<line x1="11.2" y1="421.4" x2="47.3" y2="421.4" stroke="#787878" stroke-width="1" />
<line x1="11.2" y1="454.6" x2="47.3" y2="454.6" stroke="#787878" stroke-width="1" />
<line x1="11.2" y1="485.6" x2="47.3" y2="485.6" stroke="#787878" stroke-width="1" />
<line x1="11.2" y1="516.6" x2="47.3" y2="516.6" stroke="#787878" stroke-width="1" />
<line x1="11.2" y1="547.6" x2="47.3" y2="547.6" stroke="#787878" stroke-width="1" />
<line x1="11.2" y1="578.6" x2="47.3" y2="578.6" stroke="#787878" stroke-width="1" />
<line x1="11.2" y1="609.6" x2="47.3" y2="609.6" stroke="#787878" stroke-width="1" />
<line x1="11.2" y1="640.5" x2="47.3" y2="640.5" stroke="#787878" stroke-width="1" />
<line x1="11.2" y1="671.5" x2="47.3" y2="671.5" stroke="#787878" stroke-width="1" />
<line x1="11.2" y1="702.5" x2="47.3" y2="702.5" stroke="#787878" stroke-width="1" />
<line x1="11.2" y1="733.5" x2="47.3" y2="733.5" stroke="#787878" stroke-width="1" />
<line x1="11.2" y1="764.5" x2="47.3" y2="764.5" stroke="#787878" stroke-width="1" />
<line x1="11.2" y1="795.5" x2="47.3" y2="795.5" stroke="#787878" stroke-width="1" />
<line x1="11.2" y1="826.5" x2="47.3" y2="826.5" stroke="#787878" stroke-width="1" />
<line x1="11.2" y1="857.5" x2="47.3" y2="857.5" stroke="#787878" stroke-width="1" />
<line x1="11.2" y1="888.5" x2="47.3" y2="888.5" stroke="#787878" stroke-width="1" />
<line x1="11.2" y1="919.5" x2="47.3" y2="919.5" stroke="#787878" stroke-width="1" />
<line x1="11.2" y1="950.4" x2="47.3" y2="950.4" stroke="#787878" stroke-width="1" />
<line x1="11.2" y1="981.4" x2="47.3" y2="981.4" stroke="#787878" stroke-width="1" />
<line x1="11.2" y1="1012.4" x2="47.3" y2="1012.4" stroke="#787878" stroke-width="1" />
<line x1="11.2" y1="1043.4" x2="47.3" y2="1043.4" stroke="#787878" stroke-width="1" />
<line x1="11.2" y1="1054.7" x2="47.3" y2="1054.7" stroke="#787878" stroke-width="1" />
<line x1="11.2" y1="1085.7" x2="47.3" y2="1085.7" stroke="#787878" stroke-width="1" />
<line x1="11.2" y1="1116.6" x2="47.3" y2="1116.6" stroke="#787878" stroke-width="1" />
<line x1="11.2" y1="1147.6" x2="47.3" y2="1147.6" stroke="#787878" stroke-width="1" />
<line x1="11.2" y1="1178.6" x2="47.3" y2="1178.6" stroke="#787878" stroke-width="1" />
<line x1="11.2" y1="1209.6" x2="47.3" y2="1209.6" stroke="#787878" stroke-width="1" />
<line x1="11.2" y1="1240.5" x2="47.3" y2="1240.5" stroke="#787878" stroke-width="1" />
<line x1="11.2" y1="1271.5" x2="47.3" y2="1271.5" stroke="#787878" stroke-width="1" />
<line x1="11.2" y1="1302.5" x2="47.3" y2="1302.5" stroke="#787878" stroke-width="1" />
<line x1="11.2" y1="1333.4" x2="47.3" y2="1333.4" stroke="#787878" stroke-width="1" />
<line x1="11.2" y1="1364.4" x2="47.3" y2="1364.4" stroke="#787878" stroke-width="1" />
<line x1="11.2" y1="1395.4" x2="47.3" y2="1395.4" stroke="#787878" stroke-width="1" />
<line x1="11.2" y1="1426.3" x2="47.3" y2="1426.3" stroke="#787878" stroke-width="1" />
<line x1="11.2" y1="1457.3" x2="47.3" y2="1457.3" stroke="#787878" stroke-width="1" />
<line x1="11.2" y1="1488.3" x2="47.3" y2="1488.3" stroke="#787878" stroke-width="1" />
<line x1="11.2" y1="1519.3" x2="47.3" y2="1519.3" stroke="#787878" stroke-width="1" />
<line x1="11.2" y1="1550.2" x2="47.3" y2="1550.2" stroke="#787878" stroke-width="1" />
<line x1="11.2" y1="1581.2" x2="47.3" y2="1581.2" stroke="#787878" stroke-width="1" />
<line x1="11.2" y1="1612.2" x2="47.3" y2="1612.2" stroke="#787878" stroke-width="1" />
<line x1="11.2" y1="1643.1" x2="47.3" y2="1643.1" stroke="#787878" stroke-width="1" />
<line x1="11.2" y1="1654.7" x2="47.3" y2="1654.7" stroke="#787878" stroke-width="1" />
<line x1="11.2" y1="1685.7" x2="47.3" y2="1685.7" stroke="#787878" stroke-width="1" />
<line x1="11.2" y1="300.6" x2="47.3" y2="300.6" stroke="#bdbdbd" stroke-width="1" />
<line x1="11.2" y1="334.9" x2="47.3" y2="334.9" stroke="#bdbdbd" stroke-width="1" />
<clipPath id="rc1"><rect x="11" y="300.3" width="37" height="34.9"/></clipPath>
<g clip-path="url(#rc1)">
<text transform="matrix(0.9700 0 0 1 29.20 331.20)" font-size="17.60" fill="#e6e6e6" text-anchor="middle" >1</text>
</g>
<clipPath id="rc2"><rect x="11" y="335.2" width="37" height="31.5"/></clipPath>
<g clip-path="url(#rc2)">
<text transform="matrix(0.9700 0 0 1 29.20 362.70)" font-size="17.60" fill="#e6e6e6" text-anchor="middle" >2</text>
</g>
<clipPath id="rc3"><rect x="11" y="366.7" width="37" height="31.7"/></clipPath>
<g clip-path="url(#rc3)">
<text transform="matrix(0.9700 0 0 1 29.20 394.40)" font-size="17.60" fill="#e6e6e6" text-anchor="middle" >3</text>
</g>
<clipPath id="rc4"><rect x="11" y="398.4" width="37" height="23.0"/></clipPath>
<g clip-path="url(#rc4)">
<text transform="matrix(0.9700 0 0 1 29.20 419.00)" font-size="17.60" fill="#e6e6e6" text-anchor="middle" >4</text>
</g>
<clipPath id="rc5"><rect x="11" y="421.4" width="37" height="33.2"/></clipPath>
<g clip-path="url(#rc5)">
<text transform="matrix(0.9700 0 0 1 29.20 450.60)" font-size="17.60" fill="#e6e6e6" text-anchor="middle" >5</text>
</g>
<clipPath id="rc6"><rect x="11" y="454.6" width="37" height="31.0"/></clipPath>
<g clip-path="url(#rc6)">
<text transform="matrix(0.9700 0 0 1 29.20 481.59)" font-size="17.60" fill="#e6e6e6" text-anchor="middle" >6</text>
</g>
<clipPath id="rc7"><rect x="11" y="485.6" width="37" height="31.0"/></clipPath>
<g clip-path="url(#rc7)">
<text transform="matrix(0.9700 0 0 1 29.20 512.58)" font-size="17.60" fill="#e6e6e6" text-anchor="middle" >7</text>
</g>
<clipPath id="rc8"><rect x="11" y="516.6" width="37" height="31.0"/></clipPath>
<g clip-path="url(#rc8)">
<text transform="matrix(0.9700 0 0 1 29.20 543.57)" font-size="17.60" fill="#e6e6e6" text-anchor="middle" >8</text>
</g>
<clipPath id="rc9"><rect x="11" y="547.6" width="37" height="31.0"/></clipPath>
<g clip-path="url(#rc9)">
<text transform="matrix(0.9700 0 0 1 29.20 574.56)" font-size="17.60" fill="#e6e6e6" text-anchor="middle" >9</text>
</g>
<clipPath id="rc10"><rect x="11" y="578.6" width="37" height="31.0"/></clipPath>
<g clip-path="url(#rc10)">
<text transform="matrix(0.9700 0 0 1 29.20 605.55)" font-size="17.60" fill="#e6e6e6" text-anchor="middle" >10</text>
</g>
<clipPath id="rc11"><rect x="11" y="609.6" width="37" height="31.0"/></clipPath>
<g clip-path="url(#rc11)">
<text transform="matrix(0.9700 0 0 1 29.20 636.54)" font-size="17.60" fill="#e6e6e6" text-anchor="middle" >11</text>
</g>
<clipPath id="rc12"><rect x="11" y="640.5" width="37" height="31.0"/></clipPath>
<g clip-path="url(#rc12)">
<text transform="matrix(0.9700 0 0 1 29.20 667.53)" font-size="17.60" fill="#e6e6e6" text-anchor="middle" >12</text>
</g>
<clipPath id="rc13"><rect x="11" y="671.5" width="37" height="31.0"/></clipPath>
<g clip-path="url(#rc13)">
<text transform="matrix(0.9700 0 0 1 29.20 698.52)" font-size="17.60" fill="#e6e6e6" text-anchor="middle" >13</text>
</g>
<clipPath id="rc14"><rect x="11" y="702.5" width="37" height="31.0"/></clipPath>
<g clip-path="url(#rc14)">
<text transform="matrix(0.9700 0 0 1 29.20 729.51)" font-size="17.60" fill="#e6e6e6" text-anchor="middle" >14</text>
</g>
<clipPath id="rc15"><rect x="11" y="733.5" width="37" height="31.0"/></clipPath>
<g clip-path="url(#rc15)">
<text transform="matrix(0.9700 0 0 1 29.20 760.50)" font-size="17.60" fill="#e6e6e6" text-anchor="middle" >15</text>
</g>
<clipPath id="rc16"><rect x="11" y="764.5" width="37" height="31.0"/></clipPath>
<g clip-path="url(#rc16)">
<text transform="matrix(0.9700 0 0 1 29.20 791.49)" font-size="17.60" fill="#e6e6e6" text-anchor="middle" >16</text>
</g>
<clipPath id="rc17"><rect x="11" y="795.5" width="37" height="31.0"/></clipPath>
<g clip-path="url(#rc17)">
<text transform="matrix(0.9700 0 0 1 29.20 822.48)" font-size="17.60" fill="#e6e6e6" text-anchor="middle" >17</text>
</g>
<clipPath id="rc18"><rect x="11" y="826.5" width="37" height="31.0"/></clipPath>
<g clip-path="url(#rc18)">
<text transform="matrix(0.9700 0 0 1 29.20 853.47)" font-size="17.60" fill="#e6e6e6" text-anchor="middle" >18</text>
</g>
<clipPath id="rc19"><rect x="11" y="857.5" width="37" height="31.0"/></clipPath>
<g clip-path="url(#rc19)">
<text transform="matrix(0.9700 0 0 1 29.20 884.46)" font-size="17.60" fill="#e6e6e6" text-anchor="middle" >19</text>
</g>
<clipPath id="rc20"><rect x="11" y="888.5" width="37" height="31.0"/></clipPath>
<g clip-path="url(#rc20)">
<text transform="matrix(0.9700 0 0 1 29.20 915.45)" font-size="17.60" fill="#e6e6e6" text-anchor="middle" >20</text>
</g>
<clipPath id="rc21"><rect x="11" y="919.5" width="37" height="31.0"/></clipPath>
<g clip-path="url(#rc21)">
<text transform="matrix(0.9700 0 0 1 29.20 946.44)" font-size="17.60" fill="#e6e6e6" text-anchor="middle" >21</text>
</g>
<clipPath id="rc22"><rect x="11" y="950.4" width="37" height="31.0"/></clipPath>
<g clip-path="url(#rc22)">
<text transform="matrix(0.9700 0 0 1 29.20 977.43)" font-size="17.60" fill="#e6e6e6" text-anchor="middle" >22</text>
</g>
<clipPath id="rc23"><rect x="11" y="981.4" width="37" height="31.0"/></clipPath>
<g clip-path="url(#rc23)">
<text transform="matrix(0.9700 0 0 1 29.20 1008.42)" font-size="17.60" fill="#e6e6e6" text-anchor="middle" >23</text>
</g>
<clipPath id="rc24"><rect x="11" y="1012.4" width="37" height="31.0"/></clipPath>
<g clip-path="url(#rc24)">
<text transform="matrix(0.9700 0 0 1 29.20 1039.41)" font-size="17.60" fill="#e6e6e6" text-anchor="middle" >24</text>
</g>
<clipPath id="rc25"><rect x="11" y="1043.4" width="37" height="11.3"/></clipPath>
<g clip-path="url(#rc25)">
<text transform="matrix(0.9700 0 0 1 29.20 1048.80)" font-size="17.60" fill="#e6e6e6" text-anchor="middle" >25</text>
</g>
<clipPath id="rc26"><rect x="11" y="1054.7" width="37" height="31.0"/></clipPath>
<g clip-path="url(#rc26)">
<text transform="matrix(0.9700 0 0 1 29.20 1081.67)" font-size="17.60" fill="#e6e6e6" text-anchor="middle" >26</text>
</g>
<clipPath id="rc27"><rect x="11" y="1085.7" width="37" height="31.0"/></clipPath>
<g clip-path="url(#rc27)">
<text transform="matrix(0.9700 0 0 1 29.20 1112.64)" font-size="17.60" fill="#e6e6e6" text-anchor="middle" >27</text>
</g>
<clipPath id="rc28"><rect x="11" y="1116.6" width="37" height="31.0"/></clipPath>
<g clip-path="url(#rc28)">
<text transform="matrix(0.9700 0 0 1 29.20 1143.61)" font-size="17.60" fill="#e6e6e6" text-anchor="middle" >28</text>
</g>
<clipPath id="rc29"><rect x="11" y="1147.6" width="37" height="31.0"/></clipPath>
<g clip-path="url(#rc29)">
<text transform="matrix(0.9700 0 0 1 29.20 1174.58)" font-size="17.60" fill="#e6e6e6" text-anchor="middle" >29</text>
</g>
<clipPath id="rc30"><rect x="11" y="1178.6" width="37" height="31.0"/></clipPath>
<g clip-path="url(#rc30)">
<text transform="matrix(0.9700 0 0 1 29.20 1205.55)" font-size="17.60" fill="#e6e6e6" text-anchor="middle" >30</text>
</g>
<clipPath id="rc31"><rect x="11" y="1209.6" width="37" height="31.0"/></clipPath>
<g clip-path="url(#rc31)">
<text transform="matrix(0.9700 0 0 1 29.20 1236.52)" font-size="17.60" fill="#e6e6e6" text-anchor="middle" >31</text>
</g>
<clipPath id="rc32"><rect x="11" y="1240.5" width="37" height="31.0"/></clipPath>
<g clip-path="url(#rc32)">
<text transform="matrix(0.9700 0 0 1 29.20 1267.49)" font-size="17.60" fill="#e6e6e6" text-anchor="middle" >32</text>
</g>
<clipPath id="rc33"><rect x="11" y="1271.5" width="37" height="31.0"/></clipPath>
<g clip-path="url(#rc33)">
<text transform="matrix(0.9700 0 0 1 29.20 1298.46)" font-size="17.60" fill="#e6e6e6" text-anchor="middle" >33</text>
</g>
<clipPath id="rc34"><rect x="11" y="1302.5" width="37" height="31.0"/></clipPath>
<g clip-path="url(#rc34)">
<text transform="matrix(0.9700 0 0 1 29.20 1329.43)" font-size="17.60" fill="#e6e6e6" text-anchor="middle" >34</text>
</g>
<clipPath id="rc35"><rect x="11" y="1333.4" width="37" height="31.0"/></clipPath>
<g clip-path="url(#rc35)">
<text transform="matrix(0.9700 0 0 1 29.20 1360.40)" font-size="17.60" fill="#e6e6e6" text-anchor="middle" >35</text>
</g>
<clipPath id="rc36"><rect x="11" y="1364.4" width="37" height="31.0"/></clipPath>
<g clip-path="url(#rc36)">
<text transform="matrix(0.9700 0 0 1 29.20 1391.37)" font-size="17.60" fill="#e6e6e6" text-anchor="middle" >36</text>
</g>
<clipPath id="rc37"><rect x="11" y="1395.4" width="37" height="31.0"/></clipPath>
<g clip-path="url(#rc37)">
<text transform="matrix(0.9700 0 0 1 29.20 1422.34)" font-size="17.60" fill="#e6e6e6" text-anchor="middle" >37</text>
</g>
<clipPath id="rc38"><rect x="11" y="1426.3" width="37" height="31.0"/></clipPath>
<g clip-path="url(#rc38)">
<text transform="matrix(0.9700 0 0 1 29.20 1453.31)" font-size="17.60" fill="#e6e6e6" text-anchor="middle" >38</text>
</g>
<clipPath id="rc39"><rect x="11" y="1457.3" width="37" height="31.0"/></clipPath>
<g clip-path="url(#rc39)">
<text transform="matrix(0.9700 0 0 1 29.20 1484.28)" font-size="17.60" fill="#e6e6e6" text-anchor="middle" >39</text>
</g>
<clipPath id="rc40"><rect x="11" y="1488.3" width="37" height="31.0"/></clipPath>
<g clip-path="url(#rc40)">
<text transform="matrix(0.9700 0 0 1 29.20 1515.25)" font-size="17.60" fill="#e6e6e6" text-anchor="middle" >40</text>
</g>
<clipPath id="rc41"><rect x="11" y="1519.3" width="37" height="31.0"/></clipPath>
<g clip-path="url(#rc41)">
<text transform="matrix(0.9700 0 0 1 29.20 1546.22)" font-size="17.60" fill="#e6e6e6" text-anchor="middle" >41</text>
</g>
<clipPath id="rc42"><rect x="11" y="1550.2" width="37" height="31.0"/></clipPath>
<g clip-path="url(#rc42)">
<text transform="matrix(0.9700 0 0 1 29.20 1577.19)" font-size="17.60" fill="#e6e6e6" text-anchor="middle" >42</text>
</g>
<clipPath id="rc43"><rect x="11" y="1581.2" width="37" height="31.0"/></clipPath>
<g clip-path="url(#rc43)">
<text transform="matrix(0.9700 0 0 1 29.20 1608.16)" font-size="17.60" fill="#e6e6e6" text-anchor="middle" >43</text>
</g>
<clipPath id="rc44"><rect x="11" y="1612.2" width="37" height="31.0"/></clipPath>
<g clip-path="url(#rc44)">
<text transform="matrix(0.9700 0 0 1 29.20 1639.13)" font-size="17.60" fill="#e6e6e6" text-anchor="middle" >44</text>
</g>
<clipPath id="rc45"><rect x="11" y="1643.2" width="37" height="11.5"/></clipPath>
<g clip-path="url(#rc45)">
<text transform="matrix(0.9700 0 0 1 29.20 1648.80)" font-size="17.60" fill="#e6e6e6" text-anchor="middle" >45</text>
</g>
<clipPath id="rc46"><rect x="11" y="1654.7" width="37" height="31.0"/></clipPath>
<g clip-path="url(#rc46)">
<text transform="matrix(0.9700 0 0 1 29.20 1681.70)" font-size="17.60" fill="#e6e6e6" text-anchor="middle" >46</text>
</g>
<line x1="47.6" y1="300.3" x2="47.6" y2="1670.2" stroke="#9a9a9a" stroke-width="1" />
<rect x="46.6" y="300.3" width="1.6" height="34.9" fill="#1e7145" />
<rect x="47.3" y="298.6" width="23.6" height="2.0" fill="#21a366" />
<text transform="matrix(0.9619 0 0 1 77.20 330.00)" font-size="33.14" fill="#1f1f1f" font-weight="700" stroke="#1f1f1f" stroke-width="0.7" stroke-linejoin="round" >Financial Charts</text>
<text transform="matrix(1.0337 0 0 1 76.50 360.40)" font-size="25.87" fill="#000" font-weight="700" stroke="#000" stroke-width="0.6" stroke-linejoin="round" >ABC Company Inc.</text>
<text transform="matrix(0.9996 0 0 1 74.30 388.70)" font-size="18.60" fill="#2f6fdc" font-weight="700" >Go to Table of Contents</text>
<rect x="74.3" y="390.6" width="209.4" height="1.4" fill="#2f6fdc" />
<line x1="47.5" y1="454.9" x2="2860.3" y2="454.9" stroke="#8c8c8c" stroke-width="1.2" />
<line x1="11.2" y1="454.9" x2="47.5" y2="454.9" stroke="#c8c8c8" stroke-width="1.2" />
<rect x="70.6" y="421.4" width="1331.7" height="33.2" fill="#4b50d0" />
<rect x="1416.5" y="421.4" width="1424.3" height="33.2" fill="#4b50d0" />
<text transform="matrix(1.0056 0 0 1 690.00 447.70)" font-size="27.18" fill="#fff" font-weight="700" >5 years</text>
<text transform="matrix(1.0527 0 0 1 2059.30 448.00)" font-size="26.60" fill="#fff" font-weight="700" >60 months</text>
<rect x="1402.3" y="421.4" width="14.5" height="1248.8" fill="#bfbfbf" />
<rect x="93.3" y="1043.4" width="2747.5" height="11.3" fill="#bfbfbf" />
<rect x="93.3" y="1643.2" width="2747.5" height="11.5" fill="#bfbfbf" />
<text transform="matrix(1.0065 0 0 1 327.00 497.00)" font-size="35.76" fill="#000" font-weight="700" stroke="#000" stroke-width="0.7" stroke-linejoin="round" >REVENUE BREAKDOWN - $'000</text>
<rect x="131.0" y="537.0" width="10.0" height="9.2" fill="#4bb2e6" />
<text transform="matrix(0.9117 0 0 1 145.00 548.00)" font-size="18.90" fill="#1a1a1a" >Thermal Standard</text>
<rect x="340.3" y="537.0" width="9.4" height="9.2" fill="#4f52d1" />
<text transform="matrix(0.9038 0 0 1 354.00 548.00)" font-size="18.90" fill="#1a1a1a" >Thermal High BTU</text>
<rect x="552.0" y="537.0" width="9.3" height="9.2" fill="#f07a6e" />
<text transform="matrix(0.9058 0 0 1 565.60 548.00)" font-size="18.90" fill="#1a1a1a" >Met Coking</text>
<rect x="709.0" y="537.0" width="8.8" height="9.2" fill="#f2b400" />
<text transform="matrix(0.8767 0 0 1 722.80 548.00)" font-size="18.90" fill="#1a1a1a" >Met PCI</text>
<rect x="840.0" y="537.0" width="9.0" height="9.2" fill="#2fb5a1" />
<text transform="matrix(0.9200 0 0 1 853.30 548.00)" font-size="18.90" fill="#1a1a1a" >Spot Market</text>
<rect x="1002.8" y="537.0" width="9.0" height="9.2" fill="#63a040" />
<rect x="1017.3" y="541.0" width="7.0" height="2.0" fill="#1a1a1a" />
<rect x="1080.0" y="537.0" width="9.0" height="9.2" fill="#8ea5d8" />
<rect x="1094.5" y="541.0" width="7.0" height="2.0" fill="#1a1a1a" />
<rect x="1156.0" y="537.0" width="9.0" height="9.2" fill="#f3a488" />
<rect x="1170.5" y="541.0" width="7.0" height="2.0" fill="#1a1a1a" />
<rect x="1232.7" y="537.0" width="9.0" height="9.2" fill="#bdbdbd" />
<rect x="1247.2" y="541.0" width="7.0" height="2.0" fill="#1a1a1a" />
<rect x="1309.0" y="537.0" width="9.0" height="9.2" fill="#fcd07c" />
<rect x="1323.5" y="541.0" width="7.0" height="2.0" fill="#1a1a1a" />
<line x1="199.6" y1="886.2" x2="1319.6" y2="886.2" stroke="#72a9c9" stroke-width="1.0" />
<line x1="199.6" y1="818.0" x2="1319.6" y2="818.0" stroke="#72a9c9" stroke-width="1.0" />
<line x1="199.6" y1="749.8" x2="1319.6" y2="749.8" stroke="#72a9c9" stroke-width="1.0" />
<line x1="199.6" y1="681.6" x2="1319.6" y2="681.6" stroke="#72a9c9" stroke-width="1.0" />
<line x1="199.6" y1="613.4" x2="1319.6" y2="613.4" stroke="#72a9c9" stroke-width="1.0" />
<text transform="matrix(1.0981 0 0 1 106.50 893.90)" font-size="20.06" fill="#000" font-weight="700" stroke="#000" stroke-width="0.45" stroke-linejoin="round" >50,000</text>
<text transform="matrix(1.1061 0 0 1 93.70 825.70)" font-size="20.06" fill="#000" font-weight="700" stroke="#000" stroke-width="0.45" stroke-linejoin="round" >100,000</text>
<text transform="matrix(1.1061 0 0 1 93.70 757.50)" font-size="20.06" fill="#000" font-weight="700" stroke="#000" stroke-width="0.45" stroke-linejoin="round" >150,000</text>
<text transform="matrix(1.1061 0 0 1 93.70 689.30)" font-size="20.06" fill="#000" font-weight="700" stroke="#000" stroke-width="0.45" stroke-linejoin="round" >200,000</text>
<text transform="matrix(1.1061 0 0 1 93.70 621.10)" font-size="20.06" fill="#000" font-weight="700" stroke="#000" stroke-width="0.45" stroke-linejoin="round" >250,000</text>
<rect x="155.6" y="953.8" width="6.4" height="2.8" fill="#000" />
<rect x="241.3" y="846.0" width="139.5" height="109.6" fill="#4bb2e6" />
<rect x="241.3" y="783.7" width="139.5" height="62.3" fill="#4f52d1" />
<rect x="241.3" y="743.3" width="139.5" height="40.4" fill="#f07a6e" />
<rect x="241.3" y="724.0" width="139.5" height="19.3" fill="#f2b400" />
<rect x="241.3" y="718.9" width="139.5" height="5.1" fill="#2fb5a1" />
<rect x="465.2" y="837.6" width="139.6" height="118.0" fill="#4bb2e6" />
<rect x="465.2" y="772.8" width="139.6" height="64.8" fill="#4f52d1" />
<rect x="465.2" y="729.2" width="139.6" height="43.6" fill="#f07a6e" />
<rect x="465.2" y="708.0" width="139.6" height="21.2" fill="#f2b400" />
<rect x="465.2" y="702.9" width="139.6" height="5.1" fill="#2fb5a1" />
<rect x="689.2" y="829.9" width="139.6" height="125.7" fill="#4bb2e6" />
<rect x="689.2" y="760.3" width="139.6" height="69.6" fill="#4f52d1" />
<rect x="689.2" y="713.1" width="139.6" height="47.2" fill="#f07a6e" />
<rect x="689.2" y="691.3" width="139.6" height="21.8" fill="#f2b400" />
<rect x="689.2" y="684.3" width="139.6" height="7.0" fill="#2fb5a1" />
<rect x="914.1" y="822.9" width="139.9" height="132.7" fill="#4bb2e6" />
<rect x="914.1" y="749.1" width="139.9" height="73.8" fill="#4f52d1" />
<rect x="914.1" y="698.4" width="139.9" height="50.7" fill="#f07a6e" />
<rect x="914.1" y="674.0" width="139.9" height="24.4" fill="#f2b400" />
<rect x="914.1" y="667.0" width="139.9" height="7.0" fill="#2fb5a1" />
<rect x="1138.0" y="815.8" width="140.0" height="139.8" fill="#4bb2e6" />
<rect x="1138.0" y="737.8" width="140.0" height="78.0" fill="#4f52d1" />
<rect x="1138.0" y="683.0" width="140.0" height="54.8" fill="#f07a6e" />
<rect x="1138.0" y="658.9" width="140.0" height="24.1" fill="#f2b400" />
<rect x="1138.0" y="650.9" width="140.0" height="8.0" fill="#2fb5a1" />
<rect x="199.6" y="954.0" width="1120.0" height="1.6" fill="#4ba3d6" />
<text transform="matrix(1.0479 0 0 1 286.65 1008.30)" font-size="20.93" fill="#000" font-weight="700" stroke="#000" stroke-width="0.45" stroke-linejoin="round" >2026</text>
<text transform="matrix(1.0479 0 0 1 510.60 1008.30)" font-size="20.93" fill="#000" font-weight="700" stroke="#000" stroke-width="0.45" stroke-linejoin="round" >2027</text>
<text transform="matrix(1.0479 0 0 1 734.60 1008.30)" font-size="20.93" fill="#000" font-weight="700" stroke="#000" stroke-width="0.45" stroke-linejoin="round" >2028</text>
<text transform="matrix(1.0479 0 0 1 959.65 1008.30)" font-size="20.93" fill="#000" font-weight="700" stroke="#000" stroke-width="0.45" stroke-linejoin="round" >2029</text>
<text transform="matrix(1.0479 0 0 1 1183.60 1008.30)" font-size="20.93" fill="#000" font-weight="700" stroke="#000" stroke-width="0.45" stroke-linejoin="round" >2030</text>
<text transform="matrix(0.9915 0 0 1 1826.30 496.20)" font-size="36.34" fill="#000" font-weight="700" stroke="#000" stroke-width="0.7" stroke-linejoin="round" >REVENUE BREAKDOWN - $'000</text>
<rect x="1477.1" y="526.6" width="9.7" height="9.6" fill="#4bb2e6" />
<text transform="matrix(0.9071 0 0 1 1491.70 537.60)" font-size="18.90" fill="#1a1a1a" >Thermal Standard</text>
<rect x="1680.0" y="526.6" width="9.0" height="9.6" fill="#4f52d1" />
<text transform="matrix(0.9031 0 0 1 1694.00 537.60)" font-size="18.90" fill="#1a1a1a" >Thermal High BTU</text>
<rect x="1885.0" y="526.6" width="9.0" height="9.6" fill="#f07a6e" />
<text transform="matrix(0.8974 0 0 1 1899.30 537.60)" font-size="18.90" fill="#1a1a1a" >Met Coking</text>
<rect x="2034.8" y="526.6" width="8.9" height="9.6" fill="#f2b400" />
<text transform="matrix(0.8796 0 0 1 2049.00 537.60)" font-size="18.90" fill="#1a1a1a" >Met PCI</text>
<rect x="2159.9" y="526.6" width="9.1" height="9.6" fill="#2fb5a1" />
<text transform="matrix(0.9161 0 0 1 2173.70 537.60)" font-size="18.90" fill="#1a1a1a" >Spot Market</text>
<rect x="2317.2" y="526.6" width="9.0" height="9.6" fill="#63a040" />
<rect x="2331.7" y="530.6" width="7.0" height="2.0" fill="#1a1a1a" />
<rect x="2386.0" y="526.6" width="9.0" height="9.6" fill="#8ea5d8" />
<rect x="2400.5" y="530.6" width="7.0" height="2.0" fill="#1a1a1a" />
<rect x="2456.0" y="526.6" width="9.0" height="9.6" fill="#f3a488" />
<rect x="2470.5" y="530.6" width="7.0" height="2.0" fill="#1a1a1a" />
<rect x="2525.8" y="526.6" width="9.0" height="9.6" fill="#bdbdbd" />
<rect x="2540.3" y="530.6" width="7.0" height="2.0" fill="#1a1a1a" />
<rect x="2595.8" y="526.6" width="9.0" height="9.6" fill="#fcd07c" />
<rect x="2610.3" y="530.6" width="7.0" height="2.0" fill="#1a1a1a" />
<line x1="1518.7" y1="919.3" x2="2791.7" y2="919.3" stroke="#72a9c9" stroke-width="1.0" />
<line x1="1518.7" y1="885.2" x2="2791.7" y2="885.2" stroke="#72a9c9" stroke-width="1.0" />
<line x1="1518.7" y1="851.1" x2="2791.7" y2="851.1" stroke="#72a9c9" stroke-width="1.0" />
<line x1="1518.7" y1="817.0" x2="2791.7" y2="817.0" stroke="#72a9c9" stroke-width="1.0" />
<line x1="1518.7" y1="782.9" x2="2791.7" y2="782.9" stroke="#72a9c9" stroke-width="1.0" />
<line x1="1518.7" y1="748.8" x2="2791.7" y2="748.8" stroke="#72a9c9" stroke-width="1.0" />
<line x1="1518.7" y1="714.7" x2="2791.7" y2="714.7" stroke="#72a9c9" stroke-width="1.0" />
<line x1="1518.7" y1="680.6" x2="2791.7" y2="680.6" stroke="#72a9c9" stroke-width="1.0" />
<line x1="1518.7" y1="646.5" x2="2791.7" y2="646.5" stroke="#72a9c9" stroke-width="1.0" />
<line x1="1518.7" y1="612.4" x2="2791.7" y2="612.4" stroke="#72a9c9" stroke-width="1.0" />
<text transform="matrix(1.1107 0 0 1 1438.30 926.19)" font-size="19.77" fill="#000" font-weight="700" stroke="#000" stroke-width="0.45" stroke-linejoin="round" >2,000</text>
<text transform="matrix(1.1107 0 0 1 1438.30 892.09)" font-size="19.77" fill="#000" font-weight="700" stroke="#000" stroke-width="0.45" stroke-linejoin="round" >4,000</text>
<text transform="matrix(1.1107 0 0 1 1438.30 857.99)" font-size="19.77" fill="#000" font-weight="700" stroke="#000" stroke-width="0.45" stroke-linejoin="round" >6,000</text>
<text transform="matrix(1.1107 0 0 1 1438.30 823.88)" font-size="19.77" fill="#000" font-weight="700" stroke="#000" stroke-width="0.45" stroke-linejoin="round" >8,000</text>
<text transform="matrix(1.0961 0 0 1 1427.00 789.77)" font-size="19.77" fill="#000" font-weight="700" stroke="#000" stroke-width="0.45" stroke-linejoin="round" >10,000</text>
<text transform="matrix(1.0961 0 0 1 1427.00 755.67)" font-size="19.77" fill="#000" font-weight="700" stroke="#000" stroke-width="0.45" stroke-linejoin="round" >12,000</text>
<text transform="matrix(1.0961 0 0 1 1427.00 721.56)" font-size="19.77" fill="#000" font-weight="700" stroke="#000" stroke-width="0.45" stroke-linejoin="round" >14,000</text>
<text transform="matrix(1.0961 0 0 1 1427.00 687.46)" font-size="19.77" fill="#000" font-weight="700" stroke="#000" stroke-width="0.45" stroke-linejoin="round" >16,000</text>
<text transform="matrix(1.0961 0 0 1 1427.00 653.35)" font-size="19.77" fill="#000" font-weight="700" stroke="#000" stroke-width="0.45" stroke-linejoin="round" >18,000</text>
<text transform="matrix(1.0961 0 0 1 1427.00 619.25)" font-size="19.77" fill="#000" font-weight="700" stroke="#000" stroke-width="0.45" stroke-linejoin="round" >20,000</text>
<rect x="1475.7" y="952.0" width="6.6" height="3.0" fill="#000" />
<path d="M1519.30 838.80 L1540.87 838.80 L1562.43 838.80 L1584.00 838.80 L1605.56 838.80 L1627.13 838.80 L1648.70 838.80 L1670.26 838.80 L1691.83 838.80 L1713.39 838.80 L1734.96 838.80 L1756.53 838.80 L1778.09 830.70 L1799.66 830.70 L1821.23 830.70 L1842.79 830.70 L1864.36 830.70 L1885.92 830.70 L1907.49 830.70 L1929.06 830.70 L1950.62 830.70 L1972.19 830.70 L1993.75 830.70 L2015.32 830.70 L2036.89 822.70 L2058.45 822.70 L2080.02 822.70 L2101.58 822.70 L2123.15 822.70 L2144.72 822.70 L2166.28 822.70 L2187.85 822.70 L2209.42 822.70 L2230.98 822.70 L2252.55 822.70 L2274.11 822.70 L2295.68 815.60 L2317.25 815.60 L2338.81 815.60 L2360.38 815.60 L2381.94 815.60 L2403.51 815.60 L2425.08 815.60 L2446.64 815.60 L2468.21 815.60 L2489.77 815.60 L2511.34 815.60 L2532.91 815.60 L2554.47 807.90 L2576.04 807.90 L2597.61 807.90 L2619.17 807.90 L2640.74 807.90 L2662.30 807.90 L2683.87 807.90 L2705.44 807.90 L2727.00 807.90 L2748.57 807.90 L2770.13 807.90 L2791.70 807.90 L2791.70 953.40 L2770.13 953.40 L2748.57 953.40 L2727.00 953.40 L2705.44 953.40 L2683.87 953.40 L2662.30 953.40 L2640.74 953.40 L2619.17 953.40 L2597.61 953.40 L2576.04 953.40 L2554.47 953.40 L2532.91 953.40 L2511.34 953.40 L2489.77 953.40 L2468.21 953.40 L2446.64 953.40 L2425.08 953.40 L2403.51 953.40 L2381.94 953.40 L2360.38 953.40 L2338.81 953.40 L2317.25 953.40 L2295.68 953.40 L2274.11 953.40 L2252.55 953.40 L2230.98 953.40 L2209.42 953.40 L2187.85 953.40 L2166.28 953.40 L2144.72 953.40 L2123.15 953.40 L2101.58 953.40 L2080.02 953.40 L2058.45 953.40 L2036.89 953.40 L2015.32 953.40 L1993.75 953.40 L1972.19 953.40 L1950.62 953.40 L1929.06 953.40 L1907.49 953.40 L1885.92 953.40 L1864.36 953.40 L1842.79 953.40 L1821.23 953.40 L1799.66 953.40 L1778.09 953.40 L1756.53 953.40 L1734.96 953.40 L1713.39 953.40 L1691.83 953.40 L1670.26 953.40 L1648.70 953.40 L1627.13 953.40 L1605.56 953.40 L1584.00 953.40 L1562.43 953.40 L1540.87 953.40 L1519.30 953.40 Z" fill="#4bb2e6" />
<path d="M1519.30 775.00 L1540.87 775.00 L1562.43 775.00 L1584.00 775.00 L1605.56 775.00 L1627.13 775.00 L1648.70 775.00 L1670.26 775.00 L1691.83 775.00 L1713.39 775.00 L1734.96 775.00 L1756.53 775.00 L1778.09 763.00 L1799.66 763.00 L1821.23 763.00 L1842.79 763.00 L1864.36 763.00 L1885.92 763.00 L1907.49 763.00 L1929.06 763.00 L1950.62 763.00 L1972.19 763.00 L1993.75 763.00 L2015.32 763.00 L2036.89 751.00 L2058.45 751.00 L2080.02 751.00 L2101.58 751.00 L2123.15 751.00 L2144.72 751.00 L2166.28 751.00 L2187.85 751.00 L2209.42 751.00 L2230.98 751.00 L2252.55 751.00 L2274.11 751.00 L2295.68 739.20 L2317.25 739.20 L2338.81 739.20 L2360.38 739.20 L2381.94 739.20 L2403.51 739.20 L2425.08 739.20 L2446.64 739.20 L2468.21 739.20 L2489.77 739.20 L2511.34 739.20 L2532.91 739.20 L2554.47 727.00 L2576.04 727.00 L2597.61 727.00 L2619.17 727.00 L2640.74 727.00 L2662.30 727.00 L2683.87 727.00 L2705.44 727.00 L2727.00 727.00 L2748.57 727.00 L2770.13 727.00 L2791.70 727.00 L2791.70 807.90 L2770.13 807.90 L2748.57 807.90 L2727.00 807.90 L2705.44 807.90 L2683.87 807.90 L2662.30 807.90 L2640.74 807.90 L2619.17 807.90 L2597.61 807.90 L2576.04 807.90 L2554.47 807.90 L2532.91 815.60 L2511.34 815.60 L2489.77 815.60 L2468.21 815.60 L2446.64 815.60 L2425.08 815.60 L2403.51 815.60 L2381.94 815.60 L2360.38 815.60 L2338.81 815.60 L2317.25 815.60 L2295.68 815.60 L2274.11 822.70 L2252.55 822.70 L2230.98 822.70 L2209.42 822.70 L2187.85 822.70 L2166.28 822.70 L2144.72 822.70 L2123.15 822.70 L2101.58 822.70 L2080.02 822.70 L2058.45 822.70 L2036.89 822.70 L2015.32 830.70 L1993.75 830.70 L1972.19 830.70 L1950.62 830.70 L1929.06 830.70 L1907.49 830.70 L1885.92 830.70 L1864.36 830.70 L1842.79 830.70 L1821.23 830.70 L1799.66 830.70 L1778.09 830.70 L1756.53 838.80 L1734.96 838.80 L1713.39 838.80 L1691.83 838.80 L1670.26 838.80 L1648.70 838.80 L1627.13 838.80 L1605.56 838.80 L1584.00 838.80 L1562.43 838.80 L1540.87 838.80 L1519.30 838.80 Z" fill="#4f52d1" />
<path d="M1519.30 733.50 L1540.87 733.50 L1562.43 733.50 L1584.00 733.50 L1605.56 733.50 L1627.13 733.50 L1648.70 733.50 L1670.26 733.50 L1691.83 733.50 L1713.39 733.50 L1734.96 733.50 L1756.53 733.50 L1778.09 717.90 L1799.66 717.90 L1821.23 717.90 L1842.79 717.90 L1864.36 717.90 L1885.92 717.90 L1907.49 717.90 L1929.06 717.90 L1950.62 717.90 L1972.19 717.90 L1993.75 717.90 L2015.32 717.90 L2036.89 701.50 L2058.45 701.50 L2080.02 701.50 L2101.58 701.50 L2123.15 701.50 L2144.72 701.50 L2166.28 701.50 L2187.85 701.50 L2209.42 701.50 L2230.98 701.50 L2252.55 701.50 L2274.11 701.50 L2295.68 685.30 L2317.25 685.30 L2338.81 685.30 L2360.38 685.30 L2381.94 685.30 L2403.51 685.30 L2425.08 685.30 L2446.64 685.30 L2468.21 685.30 L2489.77 685.30 L2511.34 685.30 L2532.91 685.30 L2554.47 669.80 L2576.04 669.80 L2597.61 669.80 L2619.17 669.80 L2640.74 669.80 L2662.30 669.80 L2683.87 669.80 L2705.44 669.80 L2727.00 669.80 L2748.57 669.80 L2770.13 669.80 L2791.70 669.80 L2791.70 727.00 L2770.13 727.00 L2748.57 727.00 L2727.00 727.00 L2705.44 727.00 L2683.87 727.00 L2662.30 727.00 L2640.74 727.00 L2619.17 727.00 L2597.61 727.00 L2576.04 727.00 L2554.47 727.00 L2532.91 739.20 L2511.34 739.20 L2489.77 739.20 L2468.21 739.20 L2446.64 739.20 L2425.08 739.20 L2403.51 739.20 L2381.94 739.20 L2360.38 739.20 L2338.81 739.20 L2317.25 739.20 L2295.68 739.20 L2274.11 751.00 L2252.55 751.00 L2230.98 751.00 L2209.42 751.00 L2187.85 751.00 L2166.28 751.00 L2144.72 751.00 L2123.15 751.00 L2101.58 751.00 L2080.02 751.00 L2058.45 751.00 L2036.89 751.00 L2015.32 763.00 L1993.75 763.00 L1972.19 763.00 L1950.62 763.00 L1929.06 763.00 L1907.49 763.00 L1885.92 763.00 L1864.36 763.00 L1842.79 763.00 L1821.23 763.00 L1799.66 763.00 L1778.09 763.00 L1756.53 775.00 L1734.96 775.00 L1713.39 775.00 L1691.83 775.00 L1670.26 775.00 L1648.70 775.00 L1627.13 775.00 L1605.56 775.00 L1584.00 775.00 L1562.43 775.00 L1540.87 775.00 L1519.30 775.00 Z" fill="#f07a6e" />
<path d="M1519.30 713.30 L1540.87 713.30 L1562.43 713.30 L1584.00 713.30 L1605.56 713.30 L1627.13 713.30 L1648.70 713.30 L1670.26 713.30 L1691.83 713.30 L1713.39 713.30 L1734.96 713.30 L1756.53 713.30 L1778.09 695.90 L1799.66 695.90 L1821.23 695.90 L1842.79 695.90 L1864.36 695.90 L1885.92 695.90 L1907.49 695.90 L1929.06 695.90 L1950.62 695.90 L1972.19 695.90 L1993.75 695.90 L2015.32 695.90 L2036.89 677.90 L2058.45 677.90 L2080.02 677.90 L2101.58 677.90 L2123.15 677.90 L2144.72 677.90 L2166.28 677.90 L2187.85 677.90 L2209.42 677.90 L2230.98 677.90 L2252.55 677.90 L2274.11 677.90 L2295.68 661.30 L2317.25 661.30 L2338.81 661.30 L2360.38 661.30 L2381.94 661.30 L2403.51 661.30 L2425.08 661.30 L2446.64 661.30 L2468.21 661.30 L2489.77 661.30 L2511.34 661.30 L2532.91 661.30 L2554.47 644.70 L2576.04 644.70 L2597.61 644.70 L2619.17 644.70 L2640.74 644.70 L2662.30 644.70 L2683.87 644.70 L2705.44 644.70 L2727.00 644.70 L2748.57 644.70 L2770.13 644.70 L2791.70 644.70 L2791.70 669.80 L2770.13 669.80 L2748.57 669.80 L2727.00 669.80 L2705.44 669.80 L2683.87 669.80 L2662.30 669.80 L2640.74 669.80 L2619.17 669.80 L2597.61 669.80 L2576.04 669.80 L2554.47 669.80 L2532.91 685.30 L2511.34 685.30 L2489.77 685.30 L2468.21 685.30 L2446.64 685.30 L2425.08 685.30 L2403.51 685.30 L2381.94 685.30 L2360.38 685.30 L2338.81 685.30 L2317.25 685.30 L2295.68 685.30 L2274.11 701.50 L2252.55 701.50 L2230.98 701.50 L2209.42 701.50 L2187.85 701.50 L2166.28 701.50 L2144.72 701.50 L2123.15 701.50 L2101.58 701.50 L2080.02 701.50 L2058.45 701.50 L2036.89 701.50 L2015.32 717.90 L1993.75 717.90 L1972.19 717.90 L1950.62 717.90 L1929.06 717.90 L1907.49 717.90 L1885.92 717.90 L1864.36 717.90 L1842.79 717.90 L1821.23 717.90 L1799.66 717.90 L1778.09 717.90 L1756.53 733.50 L1734.96 733.50 L1713.39 733.50 L1691.83 733.50 L1670.26 733.50 L1648.70 733.50 L1627.13 733.50 L1605.56 733.50 L1584.00 733.50 L1562.43 733.50 L1540.87 733.50 L1519.30 733.50 Z" fill="#f2b400" />
<path d="M1519.30 708.20 L1540.87 708.20 L1562.43 708.20 L1584.00 708.20 L1605.56 708.20 L1627.13 708.20 L1648.70 708.20 L1670.26 708.20 L1691.83 708.20 L1713.39 708.20 L1734.96 708.20 L1756.53 708.20 L1778.09 689.90 L1799.66 689.90 L1821.23 689.90 L1842.79 689.90 L1864.36 689.90 L1885.92 689.90 L1907.49 689.90 L1929.06 689.90 L1950.62 689.90 L1972.19 689.90 L1993.75 689.90 L2015.32 689.90 L2036.89 671.20 L2058.45 671.20 L2080.02 671.20 L2101.58 671.20 L2123.15 671.20 L2144.72 671.20 L2166.28 671.20 L2187.85 671.20 L2209.42 671.20 L2230.98 671.20 L2252.55 671.20 L2274.11 671.20 L2295.68 654.30 L2317.25 654.30 L2338.81 654.30 L2360.38 654.30 L2381.94 654.30 L2403.51 654.30 L2425.08 654.30 L2446.64 654.30 L2468.21 654.30 L2489.77 654.30 L2511.34 654.30 L2532.91 654.30 L2554.47 637.30 L2576.04 637.30 L2597.61 637.30 L2619.17 637.30 L2640.74 637.30 L2662.30 637.30 L2683.87 637.30 L2705.44 637.30 L2727.00 637.30 L2748.57 637.30 L2770.13 637.30 L2791.70 637.30 L2791.70 644.70 L2770.13 644.70 L2748.57 644.70 L2727.00 644.70 L2705.44 644.70 L2683.87 644.70 L2662.30 644.70 L2640.74 644.70 L2619.17 644.70 L2597.61 644.70 L2576.04 644.70 L2554.47 644.70 L2532.91 661.30 L2511.34 661.30 L2489.77 661.30 L2468.21 661.30 L2446.64 661.30 L2425.08 661.30 L2403.51 661.30 L2381.94 661.30 L2360.38 661.30 L2338.81 661.30 L2317.25 661.30 L2295.68 661.30 L2274.11 677.90 L2252.55 677.90 L2230.98 677.90 L2209.42 677.90 L2187.85 677.90 L2166.28 677.90 L2144.72 677.90 L2123.15 677.90 L2101.58 677.90 L2080.02 677.90 L2058.45 677.90 L2036.89 677.90 L2015.32 695.90 L1993.75 695.90 L1972.19 695.90 L1950.62 695.90 L1929.06 695.90 L1907.49 695.90 L1885.92 695.90 L1864.36 695.90 L1842.79 695.90 L1821.23 695.90 L1799.66 695.90 L1778.09 695.90 L1756.53 713.30 L1734.96 713.30 L1713.39 713.30 L1691.83 713.30 L1670.26 713.30 L1648.70 713.30 L1627.13 713.30 L1605.56 713.30 L1584.00 713.30 L1562.43 713.30 L1540.87 713.30 L1519.30 713.30 Z" fill="#2fb5a1" />
<text x="1526.1" y="977.8" font-size="20.8" fill="#000" text-anchor="end" transform="rotate(-45 1526.1 977.8)">Jan-26</text>
<text x="1569.2" y="977.8" font-size="20.8" fill="#000" text-anchor="end" transform="rotate(-45 1569.2 977.8)">Mar-26</text>
<text x="1612.4" y="977.8" font-size="20.8" fill="#000" text-anchor="end" transform="rotate(-45 1612.4 977.8)">May-26</text>
<text x="1655.5" y="977.8" font-size="20.8" fill="#000" text-anchor="end" transform="rotate(-45 1655.5 977.8)">Jul-26</text>
<text x="1698.6" y="977.8" font-size="20.8" fill="#000" text-anchor="end" transform="rotate(-45 1698.6 977.8)">Sep-26</text>
<text x="1741.8" y="977.8" font-size="20.8" fill="#000" text-anchor="end" transform="rotate(-45 1741.8 977.8)">Nov-26</text>
<text x="1784.9" y="977.8" font-size="20.8" fill="#000" text-anchor="end" transform="rotate(-45 1784.9 977.8)">Jan-27</text>
<text x="1828.0" y="977.8" font-size="20.8" fill="#000" text-anchor="end" transform="rotate(-45 1828.0 977.8)">Mar-27</text>
<text x="1871.2" y="977.8" font-size="20.8" fill="#000" text-anchor="end" transform="rotate(-45 1871.2 977.8)">May-27</text>
<text x="1914.3" y="977.8" font-size="20.8" fill="#000" text-anchor="end" transform="rotate(-45 1914.3 977.8)">Jul-27</text>
<text x="1957.4" y="977.8" font-size="20.8" fill="#000" text-anchor="end" transform="rotate(-45 1957.4 977.8)">Sep-27</text>
<text x="2000.6" y="977.8" font-size="20.8" fill="#000" text-anchor="end" transform="rotate(-45 2000.6 977.8)">Nov-27</text>
<text x="2043.7" y="977.8" font-size="20.8" fill="#000" text-anchor="end" transform="rotate(-45 2043.7 977.8)">Jan-28</text>
<text x="2086.8" y="977.8" font-size="20.8" fill="#000" text-anchor="end" transform="rotate(-45 2086.8 977.8)">Mar-28</text>
<text x="2130.0" y="977.8" font-size="20.8" fill="#000" text-anchor="end" transform="rotate(-45 2130.0 977.8)">May-28</text>
<text x="2173.1" y="977.8" font-size="20.8" fill="#000" text-anchor="end" transform="rotate(-45 2173.1 977.8)">Jul-28</text>
<text x="2216.2" y="977.8" font-size="20.8" fill="#000" text-anchor="end" transform="rotate(-45 2216.2 977.8)">Sep-28</text>
<text x="2259.3" y="977.8" font-size="20.8" fill="#000" text-anchor="end" transform="rotate(-45 2259.3 977.8)">Nov-28</text>
<text x="2302.5" y="977.8" font-size="20.8" fill="#000" text-anchor="end" transform="rotate(-45 2302.5 977.8)">Jan-29</text>
<text x="2345.6" y="977.8" font-size="20.8" fill="#000" text-anchor="end" transform="rotate(-45 2345.6 977.8)">Mar-29</text>
<text x="2388.7" y="977.8" font-size="20.8" fill="#000" text-anchor="end" transform="rotate(-45 2388.7 977.8)">May-29</text>
<text x="2431.9" y="977.8" font-size="20.8" fill="#000" text-anchor="end" transform="rotate(-45 2431.9 977.8)">Jul-29</text>
<text x="2475.0" y="977.8" font-size="20.8" fill="#000" text-anchor="end" transform="rotate(-45 2475.0 977.8)">Sep-29</text>
<text x="2518.1" y="977.8" font-size="20.8" fill="#000" text-anchor="end" transform="rotate(-45 2518.1 977.8)">Nov-29</text>
<text x="2561.3" y="977.8" font-size="20.8" fill="#000" text-anchor="end" transform="rotate(-45 2561.3 977.8)">Jan-30</text>
<text x="2604.4" y="977.8" font-size="20.8" fill="#000" text-anchor="end" transform="rotate(-45 2604.4 977.8)">Mar-30</text>
<text x="2647.5" y="977.8" font-size="20.8" fill="#000" text-anchor="end" transform="rotate(-45 2647.5 977.8)">May-30</text>
<text x="2690.7" y="977.8" font-size="20.8" fill="#000" text-anchor="end" transform="rotate(-45 2690.7 977.8)">Jul-30</text>
<text x="2733.8" y="977.8" font-size="20.8" fill="#000" text-anchor="end" transform="rotate(-45 2733.8 977.8)">Sep-30</text>
<text x="2776.9" y="977.8" font-size="20.8" fill="#000" text-anchor="end" transform="rotate(-45 2776.9 977.8)">Nov-30</text>
<text transform="matrix(1.0464 0 0 1 443.40 1098.00)" font-size="34.88" fill="#000" font-weight="700" stroke="#000" stroke-width="0.7" stroke-linejoin="round" >CASH BALANCE - $'000</text>
<line x1="198.8" y1="1496.9" x2="1328.4" y2="1496.9" stroke="#72a9c9" stroke-width="1.0" />
<text transform="matrix(1.0984 0 0 1 93.20 1504.36)" font-size="20.35" fill="#000" font-weight="700" stroke="#000" stroke-width="0.45" stroke-linejoin="round" >100,000</text>
<line x1="198.8" y1="1438.1" x2="1328.4" y2="1438.1" stroke="#72a9c9" stroke-width="1.0" />
<text transform="matrix(1.0984 0 0 1 93.20 1445.62)" font-size="20.35" fill="#000" font-weight="700" stroke="#000" stroke-width="0.45" stroke-linejoin="round" >200,000</text>
<line x1="198.8" y1="1379.4" x2="1328.4" y2="1379.4" stroke="#72a9c9" stroke-width="1.0" />
<text transform="matrix(1.0984 0 0 1 93.20 1386.88)" font-size="20.35" fill="#000" font-weight="700" stroke="#000" stroke-width="0.45" stroke-linejoin="round" >300,000</text>
<line x1="198.8" y1="1320.6" x2="1328.4" y2="1320.6" stroke="#72a9c9" stroke-width="1.0" />
<text transform="matrix(1.0984 0 0 1 93.20 1328.14)" font-size="20.35" fill="#000" font-weight="700" stroke="#000" stroke-width="0.45" stroke-linejoin="round" >400,000</text>
<line x1="198.8" y1="1261.9" x2="1328.4" y2="1261.9" stroke="#72a9c9" stroke-width="1.0" />
<text transform="matrix(1.0984 0 0 1 93.20 1269.40)" font-size="20.35" fill="#000" font-weight="700" stroke="#000" stroke-width="0.45" stroke-linejoin="round" >500,000</text>
<line x1="198.8" y1="1203.2" x2="1328.4" y2="1203.2" stroke="#72a9c9" stroke-width="1.0" />
<text transform="matrix(1.0984 0 0 1 93.20 1210.66)" font-size="20.35" fill="#000" font-weight="700" stroke="#000" stroke-width="0.45" stroke-linejoin="round" >600,000</text>
<line x1="198.8" y1="1144.4" x2="1328.4" y2="1144.4" stroke="#72a9c9" stroke-width="1.0" />
<text transform="matrix(1.0984 0 0 1 93.20 1151.92)" font-size="20.35" fill="#000" font-weight="700" stroke="#000" stroke-width="0.45" stroke-linejoin="round" >700,000</text>
<rect x="155.3" y="1554.2" width="7.1" height="2.8" fill="#000" />
<rect x="241.1" y="1507.0" width="140.5" height="48.6" fill="#4bb2e6" />
<rect x="467.0" y="1442.0" width="141.0" height="113.6" fill="#4bb2e6" />
<rect x="693.2" y="1372.2" width="140.8" height="183.4" fill="#4bb2e6" />
<rect x="919.0" y="1297.7" width="141.0" height="257.9" fill="#4bb2e6" />
<rect x="1145.2" y="1217.8" width="140.5" height="337.8" fill="#4bb2e6" />
<line x1="198.8" y1="1555.8" x2="1328.4" y2="1555.8" stroke="#4a6fb5" stroke-width="2" />
<line x1="198.8" y1="1555.6" x2="198.8" y2="1563.1" stroke="#4a6fb5" stroke-width="2" />
<line x1="424.7" y1="1555.6" x2="424.7" y2="1563.1" stroke="#4a6fb5" stroke-width="2" />
<line x1="650.6" y1="1555.6" x2="650.6" y2="1563.1" stroke="#4a6fb5" stroke-width="2" />
<line x1="876.6" y1="1555.6" x2="876.6" y2="1563.1" stroke="#4a6fb5" stroke-width="2" />
<line x1="1102.5" y1="1555.6" x2="1102.5" y2="1563.1" stroke="#4a6fb5" stroke-width="2" />
<line x1="1328.4" y1="1555.6" x2="1328.4" y2="1563.1" stroke="#4a6fb5" stroke-width="2" />
<line x1="311.8" y1="1555.6" x2="311.8" y2="1560.1" stroke="#4a6fb5" stroke-width="2" />
<text transform="matrix(1.0577 0 0 1 286.96 1609.80)" font-size="21.08" fill="#000" font-weight="700" stroke="#000" stroke-width="0.45" stroke-linejoin="round" >2026</text>
<line x1="537.7" y1="1555.6" x2="537.7" y2="1560.1" stroke="#4a6fb5" stroke-width="2" />
<text transform="matrix(1.0577 0 0 1 512.88 1609.80)" font-size="21.08" fill="#000" font-weight="700" stroke="#000" stroke-width="0.45" stroke-linejoin="round" >2027</text>
<line x1="763.6" y1="1555.6" x2="763.6" y2="1560.1" stroke="#4a6fb5" stroke-width="2" />
<text transform="matrix(1.0577 0 0 1 738.80 1609.80)" font-size="21.08" fill="#000" font-weight="700" stroke="#000" stroke-width="0.45" stroke-linejoin="round" >2028</text>
<line x1="989.5" y1="1555.6" x2="989.5" y2="1560.1" stroke="#4a6fb5" stroke-width="2" />
<text transform="matrix(1.0577 0 0 1 964.72 1609.80)" font-size="21.08" fill="#000" font-weight="700" stroke="#000" stroke-width="0.45" stroke-linejoin="round" >2029</text>
<line x1="1215.4" y1="1555.6" x2="1215.4" y2="1560.1" stroke="#4a6fb5" stroke-width="2" />
<text transform="matrix(1.0577 0 0 1 1190.64 1609.80)" font-size="21.08" fill="#000" font-weight="700" stroke="#000" stroke-width="0.45" stroke-linejoin="round" >2030</text>
<text transform="matrix(1.0623 0 0 1 1907.40 1093.90)" font-size="34.30" fill="#000" font-weight="700" stroke="#000" stroke-width="0.7" stroke-linejoin="round" >CASH BALANCE - $'000</text>
<line x1="1530.5" y1="1496.3" x2="2792.0" y2="1496.3" stroke="#72a9c9" stroke-width="1.0" />
<text transform="matrix(1.1077 0 0 1 1424.40 1502.64)" font-size="20.20" fill="#000" font-weight="700" stroke="#000" stroke-width="0.45" stroke-linejoin="round" >100,000</text>
<line x1="1530.5" y1="1438.2" x2="2792.0" y2="1438.2" stroke="#72a9c9" stroke-width="1.0" />
<text transform="matrix(1.1077 0 0 1 1424.40 1444.48)" font-size="20.20" fill="#000" font-weight="700" stroke="#000" stroke-width="0.45" stroke-linejoin="round" >200,000</text>
<line x1="1530.5" y1="1380.0" x2="2792.0" y2="1380.0" stroke="#72a9c9" stroke-width="1.0" />
<text transform="matrix(1.1077 0 0 1 1424.40 1386.32)" font-size="20.20" fill="#000" font-weight="700" stroke="#000" stroke-width="0.45" stroke-linejoin="round" >300,000</text>
<line x1="1530.5" y1="1321.9" x2="2792.0" y2="1321.9" stroke="#72a9c9" stroke-width="1.0" />
<text transform="matrix(1.1077 0 0 1 1424.40 1328.16)" font-size="20.20" fill="#000" font-weight="700" stroke="#000" stroke-width="0.45" stroke-linejoin="round" >400,000</text>
<line x1="1530.5" y1="1263.7" x2="2792.0" y2="1263.7" stroke="#72a9c9" stroke-width="1.0" />
<text transform="matrix(1.1077 0 0 1 1424.40 1270.00)" font-size="20.20" fill="#000" font-weight="700" stroke="#000" stroke-width="0.45" stroke-linejoin="round" >500,000</text>
<line x1="1530.5" y1="1205.5" x2="2792.0" y2="1205.5" stroke="#72a9c9" stroke-width="1.0" />
<text transform="matrix(1.1077 0 0 1 1424.40 1211.84)" font-size="20.20" fill="#000" font-weight="700" stroke="#000" stroke-width="0.45" stroke-linejoin="round" >600,000</text>
<line x1="1530.5" y1="1147.4" x2="2792.0" y2="1147.4" stroke="#72a9c9" stroke-width="1.0" />
<text transform="matrix(1.1077 0 0 1 1424.40 1153.68)" font-size="20.20" fill="#000" font-weight="700" stroke="#000" stroke-width="0.45" stroke-linejoin="round" >700,000</text>
<rect x="1486.3" y="1553.0" width="7.2" height="3.0" fill="#000" />
<path d="M1530.50 1554.50 L1551.88 1550.59 L1573.26 1546.68 L1594.64 1542.77 L1616.03 1538.87 L1637.41 1534.96 L1658.79 1530.13 L1680.17 1525.30 L1701.55 1520.47 L1722.93 1515.64 L1744.31 1510.80 L1765.69 1505.97 L1787.08 1500.85 L1808.46 1495.15 L1829.84 1489.50 L1851.22 1483.85 L1872.60 1478.20 L1893.98 1472.56 L1915.36 1466.87 L1936.75 1461.18 L1958.13 1456.11 L1979.51 1451.25 L2000.89 1446.40 L2022.27 1441.54 L2043.65 1436.52 L2065.03 1430.86 L2086.42 1425.20 L2107.80 1419.53 L2129.18 1413.87 L2150.56 1407.94 L2171.94 1401.83 L2193.32 1395.99 L2214.70 1390.33 L2236.08 1384.67 L2257.47 1378.18 L2278.85 1371.68 L2300.23 1365.19 L2321.61 1359.08 L2342.99 1352.98 L2364.37 1346.87 L2385.75 1340.47 L2407.14 1334.07 L2428.52 1327.68 L2449.90 1321.36 L2471.28 1315.04 L2492.66 1308.72 L2514.04 1302.69 L2535.42 1296.66 L2556.81 1290.63 L2578.19 1283.63 L2599.57 1276.63 L2620.95 1269.63 L2642.33 1263.02 L2663.71 1256.41 L2685.09 1249.80 L2706.47 1243.77 L2727.86 1237.74 L2749.24 1231.71 L2770.62 1226.01 L2792.00 1220.31 L2792.00 1554.50 L1530.50 1554.50 Z" fill="#4bb2e6" />
<line x1="1530.5" y1="1554.7" x2="2792.0" y2="1554.7" stroke="#4a6fb5" stroke-width="2" />
<line x1="1530.5" y1="1554.5" x2="1530.5" y2="1562.0" stroke="#4a6fb5" stroke-width="2" />
<line x1="1551.9" y1="1554.5" x2="1551.9" y2="1559.0" stroke="#4a6fb5" stroke-width="2" />
<line x1="1573.3" y1="1554.5" x2="1573.3" y2="1559.0" stroke="#4a6fb5" stroke-width="2" />
<line x1="1594.6" y1="1554.5" x2="1594.6" y2="1562.0" stroke="#4a6fb5" stroke-width="2" />
<line x1="1616.0" y1="1554.5" x2="1616.0" y2="1559.0" stroke="#4a6fb5" stroke-width="2" />
<line x1="1637.4" y1="1554.5" x2="1637.4" y2="1559.0" stroke="#4a6fb5" stroke-width="2" />
<line x1="1658.8" y1="1554.5" x2="1658.8" y2="1562.0" stroke="#4a6fb5" stroke-width="2" />
<line x1="1680.2" y1="1554.5" x2="1680.2" y2="1559.0" stroke="#4a6fb5" stroke-width="2" />
<line x1="1701.6" y1="1554.5" x2="1701.6" y2="1559.0" stroke="#4a6fb5" stroke-width="2" />
<line x1="1722.9" y1="1554.5" x2="1722.9" y2="1562.0" stroke="#4a6fb5" stroke-width="2" />
<line x1="1744.3" y1="1554.5" x2="1744.3" y2="1559.0" stroke="#4a6fb5" stroke-width="2" />
<line x1="1765.7" y1="1554.5" x2="1765.7" y2="1559.0" stroke="#4a6fb5" stroke-width="2" />
<line x1="1787.1" y1="1554.5" x2="1787.1" y2="1562.0" stroke="#4a6fb5" stroke-width="2" />
<line x1="1808.5" y1="1554.5" x2="1808.5" y2="1559.0" stroke="#4a6fb5" stroke-width="2" />
<line x1="1829.8" y1="1554.5" x2="1829.8" y2="1559.0" stroke="#4a6fb5" stroke-width="2" />
<line x1="1851.2" y1="1554.5" x2="1851.2" y2="1562.0" stroke="#4a6fb5" stroke-width="2" />
<line x1="1872.6" y1="1554.5" x2="1872.6" y2="1559.0" stroke="#4a6fb5" stroke-width="2" />
<line x1="1894.0" y1="1554.5" x2="1894.0" y2="1559.0" stroke="#4a6fb5" stroke-width="2" />
<line x1="1915.4" y1="1554.5" x2="1915.4" y2="1562.0" stroke="#4a6fb5" stroke-width="2" />
<line x1="1936.7" y1="1554.5" x2="1936.7" y2="1559.0" stroke="#4a6fb5" stroke-width="2" />
<line x1="1958.1" y1="1554.5" x2="1958.1" y2="1559.0" stroke="#4a6fb5" stroke-width="2" />
<line x1="1979.5" y1="1554.5" x2="1979.5" y2="1562.0" stroke="#4a6fb5" stroke-width="2" />
<line x1="2000.9" y1="1554.5" x2="2000.9" y2="1559.0" stroke="#4a6fb5" stroke-width="2" />
<line x1="2022.3" y1="1554.5" x2="2022.3" y2="1559.0" stroke="#4a6fb5" stroke-width="2" />
<line x1="2043.7" y1="1554.5" x2="2043.7" y2="1562.0" stroke="#4a6fb5" stroke-width="2" />
<line x1="2065.0" y1="1554.5" x2="2065.0" y2="1559.0" stroke="#4a6fb5" stroke-width="2" />
<line x1="2086.4" y1="1554.5" x2="2086.4" y2="1559.0" stroke="#4a6fb5" stroke-width="2" />
<line x1="2107.8" y1="1554.5" x2="2107.8" y2="1562.0" stroke="#4a6fb5" stroke-width="2" />
<line x1="2129.2" y1="1554.5" x2="2129.2" y2="1559.0" stroke="#4a6fb5" stroke-width="2" />
<line x1="2150.6" y1="1554.5" x2="2150.6" y2="1559.0" stroke="#4a6fb5" stroke-width="2" />
<line x1="2171.9" y1="1554.5" x2="2171.9" y2="1562.0" stroke="#4a6fb5" stroke-width="2" />
<line x1="2193.3" y1="1554.5" x2="2193.3" y2="1559.0" stroke="#4a6fb5" stroke-width="2" />
<line x1="2214.7" y1="1554.5" x2="2214.7" y2="1559.0" stroke="#4a6fb5" stroke-width="2" />
<line x1="2236.1" y1="1554.5" x2="2236.1" y2="1562.0" stroke="#4a6fb5" stroke-width="2" />
<line x1="2257.5" y1="1554.5" x2="2257.5" y2="1559.0" stroke="#4a6fb5" stroke-width="2" />
<line x1="2278.8" y1="1554.5" x2="2278.8" y2="1559.0" stroke="#4a6fb5" stroke-width="2" />
<line x1="2300.2" y1="1554.5" x2="2300.2" y2="1562.0" stroke="#4a6fb5" stroke-width="2" />
<line x1="2321.6" y1="1554.5" x2="2321.6" y2="1559.0" stroke="#4a6fb5" stroke-width="2" />
<line x1="2343.0" y1="1554.5" x2="2343.0" y2="1559.0" stroke="#4a6fb5" stroke-width="2" />
<line x1="2364.4" y1="1554.5" x2="2364.4" y2="1562.0" stroke="#4a6fb5" stroke-width="2" />
<line x1="2385.8" y1="1554.5" x2="2385.8" y2="1559.0" stroke="#4a6fb5" stroke-width="2" />
<line x1="2407.1" y1="1554.5" x2="2407.1" y2="1559.0" stroke="#4a6fb5" stroke-width="2" />
<line x1="2428.5" y1="1554.5" x2="2428.5" y2="1562.0" stroke="#4a6fb5" stroke-width="2" />
<line x1="2449.9" y1="1554.5" x2="2449.9" y2="1559.0" stroke="#4a6fb5" stroke-width="2" />
<line x1="2471.3" y1="1554.5" x2="2471.3" y2="1559.0" stroke="#4a6fb5" stroke-width="2" />
<line x1="2492.7" y1="1554.5" x2="2492.7" y2="1562.0" stroke="#4a6fb5" stroke-width="2" />
<line x1="2514.0" y1="1554.5" x2="2514.0" y2="1559.0" stroke="#4a6fb5" stroke-width="2" />
<line x1="2535.4" y1="1554.5" x2="2535.4" y2="1559.0" stroke="#4a6fb5" stroke-width="2" />
<line x1="2556.8" y1="1554.5" x2="2556.8" y2="1562.0" stroke="#4a6fb5" stroke-width="2" />
<line x1="2578.2" y1="1554.5" x2="2578.2" y2="1559.0" stroke="#4a6fb5" stroke-width="2" />
<line x1="2599.6" y1="1554.5" x2="2599.6" y2="1559.0" stroke="#4a6fb5" stroke-width="2" />
<line x1="2620.9" y1="1554.5" x2="2620.9" y2="1562.0" stroke="#4a6fb5" stroke-width="2" />
<line x1="2642.3" y1="1554.5" x2="2642.3" y2="1559.0" stroke="#4a6fb5" stroke-width="2" />
<line x1="2663.7" y1="1554.5" x2="2663.7" y2="1559.0" stroke="#4a6fb5" stroke-width="2" />
<line x1="2685.1" y1="1554.5" x2="2685.1" y2="1562.0" stroke="#4a6fb5" stroke-width="2" />
<line x1="2706.5" y1="1554.5" x2="2706.5" y2="1559.0" stroke="#4a6fb5" stroke-width="2" />
<line x1="2727.9" y1="1554.5" x2="2727.9" y2="1559.0" stroke="#4a6fb5" stroke-width="2" />
<line x1="2749.2" y1="1554.5" x2="2749.2" y2="1562.0" stroke="#4a6fb5" stroke-width="2" />
<line x1="2770.6" y1="1554.5" x2="2770.6" y2="1559.0" stroke="#4a6fb5" stroke-width="2" />
<line x1="2792.0" y1="1554.5" x2="2792.0" y2="1559.0" stroke="#4a6fb5" stroke-width="2" />
<line x1="2792.0" y1="1554.5" x2="2792.0" y2="1562.0" stroke="#4a6fb5" stroke-width="2" />
<text x="1538.0" y="1584.0" font-size="19.8" fill="#000" text-anchor="end" transform="rotate(-45 1538.0 1584.0)">Jan-26</text>
<text x="1602.1" y="1584.0" font-size="19.8" fill="#000" text-anchor="end" transform="rotate(-45 1602.1 1584.0)">Apr-26</text>
<text x="1666.3" y="1584.0" font-size="19.8" fill="#000" text-anchor="end" transform="rotate(-45 1666.3 1584.0)">Jul-26</text>
<text x="1730.4" y="1584.0" font-size="19.8" fill="#000" text-anchor="end" transform="rotate(-45 1730.4 1584.0)">Oct-26</text>
<text x="1794.6" y="1584.0" font-size="19.8" fill="#000" text-anchor="end" transform="rotate(-45 1794.6 1584.0)">Jan-27</text>
<text x="1858.7" y="1584.0" font-size="19.8" fill="#000" text-anchor="end" transform="rotate(-45 1858.7 1584.0)">Apr-27</text>
<text x="1922.9" y="1584.0" font-size="19.8" fill="#000" text-anchor="end" transform="rotate(-45 1922.9 1584.0)">Jul-27</text>
<text x="1987.0" y="1584.0" font-size="19.8" fill="#000" text-anchor="end" transform="rotate(-45 1987.0 1584.0)">Oct-27</text>
<text x="2051.2" y="1584.0" font-size="19.8" fill="#000" text-anchor="end" transform="rotate(-45 2051.2 1584.0)">Jan-28</text>
<text x="2115.3" y="1584.0" font-size="19.8" fill="#000" text-anchor="end" transform="rotate(-45 2115.3 1584.0)">Apr-28</text>
<text x="2179.4" y="1584.0" font-size="19.8" fill="#000" text-anchor="end" transform="rotate(-45 2179.4 1584.0)">Jul-28</text>
<text x="2243.6" y="1584.0" font-size="19.8" fill="#000" text-anchor="end" transform="rotate(-45 2243.6 1584.0)">Oct-28</text>
<text x="2307.7" y="1584.0" font-size="19.8" fill="#000" text-anchor="end" transform="rotate(-45 2307.7 1584.0)">Jan-29</text>
<text x="2371.9" y="1584.0" font-size="19.8" fill="#000" text-anchor="end" transform="rotate(-45 2371.9 1584.0)">Apr-29</text>
<text x="2436.0" y="1584.0" font-size="19.8" fill="#000" text-anchor="end" transform="rotate(-45 2436.0 1584.0)">Jul-29</text>
<text x="2500.2" y="1584.0" font-size="19.8" fill="#000" text-anchor="end" transform="rotate(-45 2500.2 1584.0)">Oct-29</text>
<text x="2564.3" y="1584.0" font-size="19.8" fill="#000" text-anchor="end" transform="rotate(-45 2564.3 1584.0)">Jan-30</text>
<text x="2628.4" y="1584.0" font-size="19.8" fill="#000" text-anchor="end" transform="rotate(-45 2628.4 1584.0)">Apr-30</text>
<text x="2692.6" y="1584.0" font-size="19.8" fill="#000" text-anchor="end" transform="rotate(-45 2692.6 1584.0)">Jul-30</text>
<text x="2756.7" y="1584.0" font-size="19.8" fill="#000" text-anchor="end" transform="rotate(-45 2756.7 1584.0)">Oct-30</text>
<clipPath id="sheetclip"><rect x="47.5" y="1655" width="2813" height="15.2"/></clipPath><g clip-path="url(#sheetclip)">
<text transform="matrix(1.0123 0 0 1 340.00 1694.60)" font-size="35.76" fill="#000" font-weight="700" stroke="#000" stroke-width="0.45" stroke-linejoin="round" >OPERATING CASH FLOW - $'000</text>
<text transform="matrix(1.0123 0 0 1 1827.00 1692.50)" font-size="35.76" fill="#000" font-weight="700" stroke="#000" stroke-width="0.45" stroke-linejoin="round" >OPERATING CASH FLOW - $'000</text>
</g>
<rect x="2860.3" y="278.0" width="30.7" height="1392.2" fill="#0c0c0c" />
<rect x="2862.5" y="280.0" width="26.0" height="1388.0" fill="#151515" rx="13" />
<path d="M2868.9 295.7 L2883.2 295.7 L2876.05 285.9 Z" fill="#9a9a9a" stroke="#9a9a9a" stroke-width="1.5" stroke-linejoin="round"/>
<rect x="2870.1" y="303.8" width="11.9" height="661.2" fill="#9b9b9b" rx="6" />
<path d="M2868.9 1654.0 L2883.2 1654.0 L2876.05 1663.8 Z" fill="#9a9a9a" stroke="#9a9a9a" stroke-width="1.5" stroke-linejoin="round"/>
<rect x="11.0" y="1670.2" width="2880.0" height="48.0" fill="#0b0b0b" />
<rect x="11.0" y="1718.2" width="2880.0" height="33.0" fill="#141414" />
<line x1="11.0" y1="1718.6" x2="2891.0" y2="1718.6" stroke="#262626" stroke-width="1" />
<path d="M54.6 1686.3 L47.0 1693.1 L54.6 1699.9" fill="none" stroke="#8e8e8e" stroke-width="1.5" />
<path d="M95.6 1686.3 L103.2 1693.1 L95.6 1699.9" fill="none" stroke="#c4c4c4" stroke-width="1.5" />
<text transform="matrix(0.9495 0 0 1 190.60 1702.50)" font-size="21.51" fill="#f2f2f2" >Contents</text>
<line x1="292.6" y1="1680.8" x2="292.6" y2="1707.6" stroke="#555555" stroke-width="1.2" />
<rect x="299.2" y="1676.2" width="127.8" height="35.5" fill="#fdea73" rx="6" />
<text x="313.7" y="1702.5" font-size="21.5" fill="#121212" textLength="98.9" lengthAdjust="spacingAndGlyphs" >Dashboard</text>
<line x1="433.7" y1="1680.8" x2="433.7" y2="1707.6" stroke="#555555" stroke-width="1.2" />
<rect x="440.3" y="1676.2" width="105.6" height="35.5" fill="#fdea73" rx="6" />
<text x="452.7" y="1702.5" font-size="21.5" fill="#121212" textLength="80.9" lengthAdjust="spacingAndGlyphs" >Revenue</text>
<line x1="552.7" y1="1680.8" x2="552.7" y2="1707.6" stroke="#555555" stroke-width="1.2" />
<rect x="559.3" y="1676.2" width="78.7" height="35.5" fill="#fdea73" rx="6" />
<text x="568.9" y="1702.5" font-size="21.5" fill="#121212" textLength="59.5" lengthAdjust="spacingAndGlyphs" >COGS</text>
<line x1="644.4" y1="1680.8" x2="644.4" y2="1707.6" stroke="#555555" stroke-width="1.2" />
<rect x="651.0" y="1676.2" width="75.5" height="35.5" fill="#fdea73" rx="6" />
<text x="660.7" y="1702.5" font-size="21.5" fill="#121212" textLength="56.2" lengthAdjust="spacingAndGlyphs" >OPEX</text>
<line x1="733.7" y1="1680.8" x2="733.7" y2="1707.6" stroke="#555555" stroke-width="1.2" />
<rect x="740.3" y="1676.2" width="88.4" height="35.5" fill="#fdea73" rx="6" />
<text x="753.6" y="1702.5" font-size="21.5" fill="#121212" textLength="61.8" lengthAdjust="spacingAndGlyphs" >Payroll</text>
<line x1="835.5" y1="1680.8" x2="835.5" y2="1707.6" stroke="#555555" stroke-width="1.2" />
<rect x="842.1" y="1676.2" width="86.5" height="35.5" fill="#fdea73" rx="6" />
<text x="851.1" y="1702.5" font-size="21.5" fill="#121212" textLength="68.5" lengthAdjust="spacingAndGlyphs" >CAPEX</text>
<line x1="935.8" y1="1680.8" x2="935.8" y2="1707.6" stroke="#555555" stroke-width="1.2" />
<rect x="942.4" y="1676.2" width="112.4" height="35.5" fill="#fdea73" rx="6" />
<text x="955.9" y="1702.5" font-size="21.5" fill="#121212" textLength="85.4" lengthAdjust="spacingAndGlyphs" >CapTable</text>
<line x1="1061.6" y1="1680.8" x2="1061.6" y2="1707.6" stroke="#555555" stroke-width="1.2" />
<rect x="1068.2" y="1676.2" width="89.3" height="35.5" fill="#fdea73" rx="6" />
<text x="1081.4" y="1702.5" font-size="21.5" fill="#121212" textLength="62.9" lengthAdjust="spacingAndGlyphs" >Capital</text>
<line x1="1164.7" y1="1680.8" x2="1164.7" y2="1707.6" stroke="#555555" stroke-width="1.2" />
<rect x="1171.3" y="1676.2" width="41.0" height="35.5" fill="#4cb3ea" rx="6" />
<text x="1182.3" y="1702.5" font-size="21.5" fill="#121212" textLength="19.1" lengthAdjust="spacingAndGlyphs" >IS</text>
<line x1="1219.4" y1="1680.8" x2="1219.4" y2="1707.6" stroke="#555555" stroke-width="1.2" />
<rect x="1226.0" y="1676.2" width="47.5" height="35.5" fill="#4cb3ea" rx="6" />
<text x="1236.3" y="1702.5" font-size="21.5" fill="#121212" textLength="26.9" lengthAdjust="spacingAndGlyphs" >CF</text>
<line x1="1280.4" y1="1680.8" x2="1280.4" y2="1707.6" stroke="#555555" stroke-width="1.2" />
<rect x="1287.0" y="1676.2" width="47.8" height="35.5" fill="#4cb3ea" rx="6" />
<text x="1297.4" y="1702.5" font-size="21.5" fill="#121212" textLength="27.0" lengthAdjust="spacingAndGlyphs" >BS</text>
<line x1="1341.6" y1="1680.8" x2="1341.6" y2="1707.6" stroke="#555555" stroke-width="1.2" />
<rect x="1348.2" y="1676.2" width="114.5" height="35.5" fill="#4cb3ea" rx="6" />
<text x="1360.5" y="1702.5" font-size="21.5" fill="#121212" textLength="89.9" lengthAdjust="spacingAndGlyphs" >Scenarios</text>
<line x1="1469.4" y1="1680.8" x2="1469.4" y2="1707.6" stroke="#555555" stroke-width="1.2" />
<rect x="1476.0" y="1676.2" width="114.5" height="35.5" fill="#4cb3ea" rx="6" />
<text x="1491.9" y="1702.5" font-size="21.5" fill="#121212" textLength="82.8" lengthAdjust="spacingAndGlyphs" >Valuation</text>
<line x1="1597.3" y1="1680.8" x2="1597.3" y2="1707.6" stroke="#555555" stroke-width="1.2" />
<rect x="1603.9" y="1676.2" width="113.6" height="35.5" fill="#4cb3ea" rx="6" />
<text x="1617.5" y="1702.5" font-size="21.5" fill="#121212" textLength="86.5" lengthAdjust="spacingAndGlyphs" >Summary</text>
<line x1="1724.7" y1="1680.8" x2="1724.7" y2="1707.6" stroke="#555555" stroke-width="1.2" />
<rect x="1731.3" y="1676.2" width="47.1" height="35.5" fill="#4cb3ea" rx="6" />
<text x="1741.4" y="1702.5" font-size="21.5" fill="#121212" textLength="27.0" lengthAdjust="spacingAndGlyphs" >BE</text>
<line x1="1785.6" y1="1680.8" x2="1785.6" y2="1707.6" stroke="#555555" stroke-width="1.2" />
<rect x="1792.2" y="1676.2" width="71.4" height="35.5" fill="#4cb3ea" rx="6" />
<text x="1802.6" y="1702.5" font-size="21.5" fill="#121212" textLength="50.5" lengthAdjust="spacingAndGlyphs" >ROIC</text>
<line x1="1870.4" y1="1680.8" x2="1870.4" y2="1707.6" stroke="#555555" stroke-width="1.2" />
<line x1="1968.3" y1="1680.8" x2="1968.3" y2="1707.6" stroke="#555555" stroke-width="1.2" />
<rect x="1974.9" y="1676.2" width="64.0" height="35.5" fill="#4cb3ea" rx="6" />
<text x="1985.6" y="1702.5" font-size="21.5" fill="#121212" textLength="42.7" lengthAdjust="spacingAndGlyphs" >KPIs</text>
<defs><linearGradient id="actg" x1="0" y1="0" x2="0" y2="1"><stop offset="0" stop-color="#ffffff"/><stop offset="1" stop-color="#cfe5f7"/></linearGradient></defs>
<path d="M1869 1670.2 L1970 1670.2 Q1962 1670.2 1962 1678 L1962 1705.5 Q1962 1711.7 1955.8 1711.7 L1883.2 1711.7 Q1877 1711.7 1877 1705.5 L1877 1678 Q1877 1670.2 1869 1670.2 Z" fill="url(#actg)" />
<text transform="matrix(0.9653 0 0 1 1889.60 1697.50)" font-size="20.93" fill="#1c2733" >Charts</text>
<rect x="1889.0" y="1704.7" width="60.9" height="3.1" fill="#1e8a4a" />
<line x1="1968.7" y1="1680.8" x2="1968.7" y2="1707.6" stroke="#555555" stroke-width="1.2" />
<line x1="2045.0" y1="1680.8" x2="2045.0" y2="1707.6" stroke="#555555" stroke-width="1.2" />
<clipPath id="stab"><rect x="2050" y="1670" width="22" height="45"/></clipPath><g clip-path="url(#stab)">
<rect x="2052.0" y="1676.2" width="40.0" height="35.5" fill="#4cb3ea" rx="6" />
<text x="2064.3" y="1702.5" font-size="21.5" fill="#121212" >S</text>
</g>
<circle cx="2088.9" cy="1692.7" r="2.3" fill="#e8e8e8"/>
<circle cx="2095.2" cy="1692.7" r="2.3" fill="#e8e8e8"/>
<circle cx="2101.5" cy="1692.7" r="2.3" fill="#e8e8e8"/>
<line x1="2135.1" y1="1692.7" x2="2151.9" y2="1692.7" stroke="#e8e8e8" stroke-width="1.5" />
<line x1="2143.5" y1="1684.3" x2="2143.5" y2="1701.1" stroke="#e8e8e8" stroke-width="1.5" />
<rect x="2189.8" y="1686.6" width="3.6" height="3.4" fill="#e8e8e8" />
<rect x="2189.8" y="1692.8" width="3.6" height="3.4" fill="#e8e8e8" />
<rect x="2189.8" y="1699.0" width="3.6" height="3.4" fill="#e8e8e8" />
<rect x="2217.2" y="1679.9" width="642.5" height="27.1" fill="#171717" rx="13.5" />
<path d="M2234.2 1686.5 L2234.2 1699.5 L2225.2 1693.0 Z" fill="#9a9a9a" stroke="#9a9a9a" stroke-width="1.5" stroke-linejoin="round"/>
<rect x="2241.6" y="1686.8" width="560.4" height="12.2" fill="#9b9b9b" rx="6.1" />
<path d="M2842.6 1686.5 L2842.6 1699.5 L2851.6 1693.0 Z" fill="#9a9a9a" stroke="#9a9a9a" stroke-width="1.5" stroke-linejoin="round"/>
<text transform="matrix(0.9390 0 0 1 27.20 1741.10)" font-size="15.70" fill="#e6e6e6" >Ready</text>
<rect x="99.8" y="1727.0" width="20.5" height="17.5" fill="none" stroke="#d8d8d8" stroke-width="1.4" />
<line x1="99.8" y1="1730.8" x2="120.3" y2="1730.8" stroke="#d8d8d8" stroke-width="1.3" />
<line x1="102.5" y1="1735.0" x2="107.5" y2="1735.0" stroke="#d8d8d8" stroke-width="1.2" />
<line x1="102.5" y1="1738.5" x2="107.5" y2="1738.5" stroke="#d8d8d8" stroke-width="1.2" />
<circle cx="114.2" cy="1739.0" r="5.6" fill="#141414" stroke="#d8d8d8" stroke-width="1.4"/>
<circle cx="114.2" cy="1739.0" r="2.4" fill="#d8d8d8"/>
<circle cx="155.5" cy="1727.2" r="2.6" fill="none" stroke="#e0e0e0" stroke-width="1.3"/>
<path d="M147 1731.5 Q155.5 1735 164 1731.5 M155.5 1733 L152.5 1745 M155.5 1733 L158 1740" fill="none" stroke="#e0e0e0" stroke-width="1.4" />
<path d="M159.5 1737.5 L167 1745 M167 1737.5 L159.5 1745" fill="none" stroke="#e0e0e0" stroke-width="1.3" />
<text transform="matrix(0.9974 0 0 1 173.30 1741.10)" font-size="15.70" fill="#f0f0f0" font-weight="700" >Accessibility: Investigate</text>
<rect x="2445.0" y="1718.8" width="60.0" height="31.5" fill="#242424" />
<rect x="2465.0" y="1725.5" width="18.8" height="18.2" fill="none" stroke="#e8e8e8" stroke-width="2.0" />
<line x1="2471.3" y1="1725.5" x2="2471.3" y2="1743.7" stroke="#e8e8e8" stroke-width="1.9" />
<line x1="2465.0" y1="1731.6" x2="2483.8" y2="1731.6" stroke="#e8e8e8" stroke-width="1.9" />
<line x1="2477.5" y1="1725.5" x2="2477.5" y2="1743.7" stroke="#e8e8e8" stroke-width="1.9" />
<line x1="2465.0" y1="1737.6" x2="2483.8" y2="1737.6" stroke="#e8e8e8" stroke-width="1.9" />
<rect x="2524.9" y="1725.3" width="20.2" height="18.6" fill="none" stroke="#e8e8e8" stroke-width="1.8" />
<rect x="2529.3" y="1729.3" width="11.4" height="10.6" fill="none" stroke="#e8e8e8" stroke-width="1.5" />
<line x1="2531.5" y1="1732.0" x2="2538.5" y2="1732.0" stroke="#e8e8e8" stroke-width="1.2" />
<line x1="2531.5" y1="1734.6" x2="2538.5" y2="1734.6" stroke="#e8e8e8" stroke-width="1.2" />
<line x1="2531.5" y1="1737.2" x2="2538.5" y2="1737.2" stroke="#e8e8e8" stroke-width="1.2" />
<rect x="2584.9" y="1725.3" width="20.2" height="18.6" fill="none" stroke="#e8e8e8" stroke-width="1.8" />
<path d="M2589.5 1725.3 L2589.5 1736.0 M2584.9 1736.0 L2597.8 1736.0 L2597.8 1725.3" fill="none" stroke="#e8e8e8" stroke-width="1.6" />
<line x1="2633.0" y1="1734.1" x2="2644.6" y2="1734.1" stroke="#d8d8d8" stroke-width="1.3" />
<line x1="2653.2" y1="1734.7" x2="2800.8" y2="1734.7" stroke="#a6a6a6" stroke-width="2.4" />
<rect x="2726.0" y="1726.0" width="7.8" height="17.0" fill="#b0b0b0" />
<line x1="2808.6" y1="1734.1" x2="2820.6" y2="1734.1" stroke="#e0e0e0" stroke-width="1.3" />
<line x1="2814.6" y1="1728.1" x2="2814.6" y2="1740.1" stroke="#e0e0e0" stroke-width="1.3" />
<text transform="matrix(0.9988 0 0 1 2840.40 1740.70)" font-size="15.55" fill="#e6e6e6" >110%</text>
</svg></body></html>
